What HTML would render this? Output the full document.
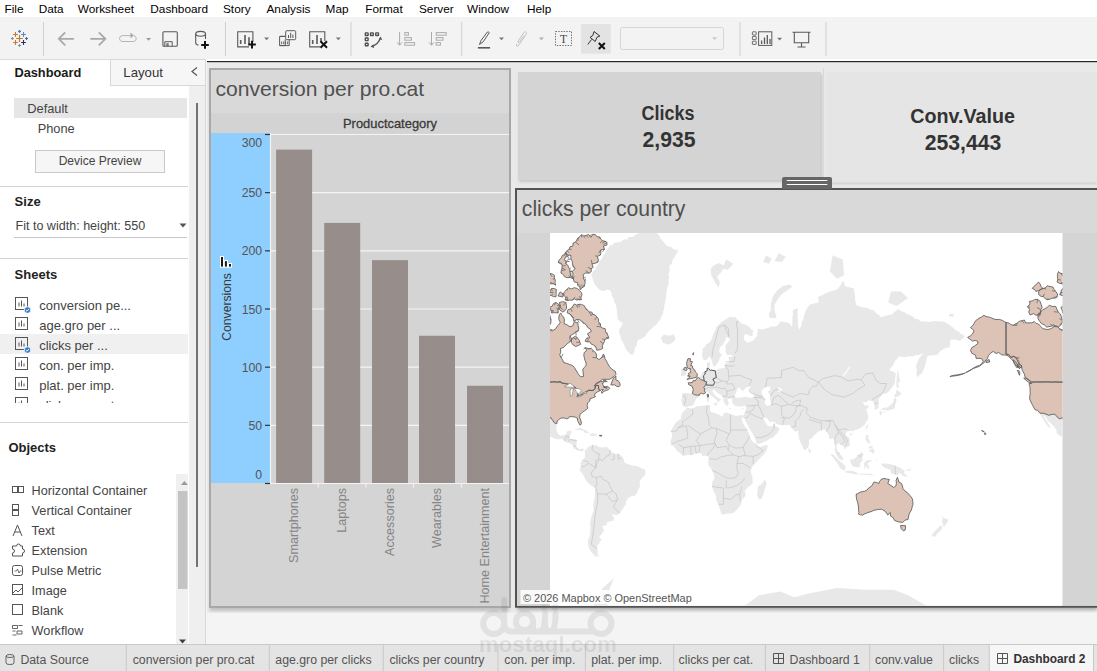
<!DOCTYPE html>
<html><head><meta charset="utf-8"><title>Tableau</title>
<style>html,body{margin:0;padding:0;width:1097px;height:671px;overflow:hidden;background:#f3f3f3}
svg{display:block;font-family:"Liberation Sans", sans-serif}</style></head>
<body><svg width="1097" height="671" viewBox="0 0 1097 671">
<rect x="0" y="0" width="1097" height="671" fill="#f3f3f3" />
<rect x="0" y="0" width="1097" height="17" fill="#ffffff" />
<text x="4.5" y="13" font-size="11.8" fill="#000" font-weight="normal" text-anchor="start" >File</text>
<text x="38.7" y="13" font-size="11.8" fill="#000" font-weight="normal" text-anchor="start" >Data</text>
<text x="77.8" y="13" font-size="11.8" fill="#000" font-weight="normal" text-anchor="start" >Worksheet</text>
<text x="150.3" y="13" font-size="11.8" fill="#000" font-weight="normal" text-anchor="start" >Dashboard</text>
<text x="223" y="13" font-size="11.8" fill="#000" font-weight="normal" text-anchor="start" >Story</text>
<text x="266.5" y="13" font-size="11.8" fill="#000" font-weight="normal" text-anchor="start" >Analysis</text>
<text x="325.6" y="13" font-size="11.8" fill="#000" font-weight="normal" text-anchor="start" >Map</text>
<text x="365.3" y="13" font-size="11.8" fill="#000" font-weight="normal" text-anchor="start" >Format</text>
<text x="419" y="13" font-size="11.8" fill="#000" font-weight="normal" text-anchor="start" >Server</text>
<text x="467.1" y="13" font-size="11.8" fill="#000" font-weight="normal" text-anchor="start" >Window</text>
<text x="527" y="13" font-size="11.8" fill="#000" font-weight="normal" text-anchor="start" >Help</text>
<rect x="0" y="17" width="1097" height="43" fill="#f3f3f3" />
<line x1="43.5" y1="22" x2="43.5" y2="56" stroke="#d0d0d0" stroke-width="1" />
<line x1="225.5" y1="22" x2="225.5" y2="56" stroke="#d0d0d0" stroke-width="1" />
<line x1="351" y1="22" x2="351" y2="56" stroke="#d0d0d0" stroke-width="1" />
<line x1="461.7" y1="22" x2="461.7" y2="56" stroke="#d0d0d0" stroke-width="1" />
<line x1="740" y1="22" x2="740" y2="56" stroke="#d0d0d0" stroke-width="1" />
<line x1="826" y1="22" x2="826" y2="56" stroke="#d0d0d0" stroke-width="1" />
<path d="M16.1 38.5H22.9M19.5 35.1V41.9" stroke="#c77a2e" stroke-width="1.2"/>
<path d="M13.1 34.5H17.9M15.5 32.1V36.9" stroke="#c77a2e" stroke-width="1.1"/>
<path d="M21.1 34.5H25.9M23.5 32.1V36.9" stroke="#5c87c2" stroke-width="1.1"/>
<path d="M13.1 42.5H17.9M15.5 40.1V44.9" stroke="#c77a2e" stroke-width="1.1"/>
<path d="M21.1 42.5H25.9M23.5 40.1V44.9" stroke="#2d3070" stroke-width="1.1"/>
<path d="M18.0 31.4H21.0M19.5 29.9V32.9" stroke="#4f7db8" stroke-width="1.1"/>
<path d="M10.9 38.5H13.9M12.4 37.0V40.0" stroke="#7c95b0" stroke-width="1.1"/>
<path d="M25.0 38.5H28.0M26.5 37.0V40.0" stroke="#4468a8" stroke-width="1.1"/>
<path d="M18.0 45.5H21.0M19.5 44.0V47.0" stroke="#7c95b0" stroke-width="1.1"/>
<path d="M59.2 38.8H73.9M65.2 32.4L58.8 38.8L65.2 45.3" fill="none" stroke="#a9a9a9" stroke-width="1.8"/>
<path d="M90.3 38.8H105M98.8 32.4L105.4 38.8L98.8 45.3" fill="none" stroke="#a9a9a9" stroke-width="1.8"/>
<path d="M130.5 35.6H122a3 3 0 0 0 0 5.9H133.8a3 3 0 0 0 0 -5.9" fill="none" stroke="#b5b5b5" stroke-width="1"/>
<path d="M130.5 32.6L133.8 35.6L130.5 38.2Z" fill="#a5a5a5"/>
<path d="M146.1 37.900000000000006H151.1L148.6 40.7Z" fill="#9a9a9a"/>
<rect x="162.9" y="31.7" width="14.4" height="14.6" rx="1" fill="none" stroke="#5a5a5a" stroke-width="1.1"/>
<path d="M164.8 46.3V41.7H172.2V46.3" fill="none" stroke="#5a5a5a" stroke-width="1"/><rect x="166.3" y="43.2" width="2.4" height="3" fill="#777"/>
<path d="M195.7 33.8V42.7Q195.7 44.5 198.5 45.3M205.5 33.8V38.9" fill="none" stroke="#5a5a5a" stroke-width="1.1"/><ellipse cx="200.6" cy="33.8" rx="4.9" ry="2.4" fill="none" stroke="#5a5a5a" stroke-width="1.1"/>
<path d="M201.2 44.9H208.8M205 41.1V48.7" stroke="#111" stroke-width="2"/>
<path d="M249 46.9H237.7V31.7H252.9V42" fill="none" stroke="#5a5a5a" stroke-width="1.1"/>
<path d="M240.7 44V40M245 44V35M249 44V37.2" stroke="#5a5a5a" stroke-width="1.6"/>
<path d="M248.2 44.6H255.8M252 40.8V48.4" stroke="#111" stroke-width="2"/>
<path d="M264.1 37.5H269.1L266.6 40.3Z" fill="#777"/>
<rect x="285.7" y="30.7" width="10" height="9" rx="1" fill="#f3f3f3" stroke="#5a5a5a" stroke-width="1"/>
<path d="M288.5 38V35M290.7 38V32.8M292.9 38V34.5" stroke="#5a5a5a" stroke-width="1"/>
<path d="M285.2 39.5V45.6H279.6V36.4H285.2" fill="none" stroke="#5a5a5a" stroke-width="1"/><path d="M280 36.4H285.2" stroke="#5a5a5a"/>
<path d="M281.6 44.2V41.5M283.6 44.2V41.5M285.6 44.2V41.5M287.6 44.2V41.5" stroke="#5a5a5a" stroke-width="0.9"/><path d="M279.6 45.6H289.2V39.5" fill="none" stroke="#5a5a5a" stroke-width="1"/>
<path d="M320 46.9H309.7V31.7H324.8V41" fill="none" stroke="#5a5a5a" stroke-width="1.1"/>
<path d="M312.7 44V40M317 44V35M321 42V38" stroke="#5a5a5a" stroke-width="1.6"/>
<path d="M320.5 41.3L327 47.8M327 41.3L320.5 47.8" stroke="#111" stroke-width="2"/>
<path d="M335.8 37.5H340.8L338.3 40.3Z" fill="#777"/>
<rect x="365.3" y="32.9" width="2.8" height="2.6" rx="0.5" fill="none" stroke="#4f4f4f" stroke-width="1.4"/>
<rect x="370.5" y="32.9" width="2.8" height="2.6" rx="0.5" fill="none" stroke="#4f4f4f" stroke-width="1.4"/>
<rect x="375.7" y="32.9" width="2.8" height="2.6" rx="0.5" fill="none" stroke="#4f4f4f" stroke-width="1.4"/>
<rect x="365.3" y="38" width="2.8" height="2.6" rx="0.5" fill="none" stroke="#4f4f4f" stroke-width="1.4"/>
<rect x="365.3" y="43.2" width="2.8" height="2.6" rx="0.5" fill="none" stroke="#4f4f4f" stroke-width="1.4"/>
<path d="M371.5 46.5Q378.5 44.5 380.5 37.8" fill="none" stroke="#5a5a5a" stroke-width="1.3"/><path d="M380.8 36.5L382.2 40L378.6 39.2Z M370.5 46.8L373.5 44.2L374.2 48Z" fill="#5a5a5a"/>
<path d="M399.6 32V45M397.2 42.3L399.6 45.3L402 42.3" fill="none" stroke="#ababab" stroke-width="1"/>
<rect x="404.8" y="32.6" width="3.6" height="2.6" fill="none" stroke="#ababab"/><rect x="404.8" y="37.6" width="6.6" height="2.6" fill="none" stroke="#ababab"/><rect x="404.8" y="42.6" width="9.8" height="2.6" fill="none" stroke="#ababab"/>
<path d="M431.5 32V45M429.1 42.3L431.5 45.3L433.9 42.3" fill="none" stroke="#ababab" stroke-width="1"/>
<rect x="436.2" y="32.6" width="10" height="2.6" fill="none" stroke="#ababab"/><rect x="436.2" y="37.6" width="6.8" height="2.6" fill="none" stroke="#ababab"/><rect x="436.2" y="42.6" width="4.2" height="2.6" fill="none" stroke="#ababab"/>
<path d="M479.5 44.5L481 40.5L487.2 32.2Q488.5 31.5 489.3 32.6L483.2 41.8L479.5 44.5Z" fill="none" stroke="#5a5a5a" stroke-width="1"/>
<path d="M477.9 47.8H490.1" stroke="#5a5a5a" stroke-width="1.6"/>
<path d="M499.0 37.5H504.0L501.5 40.3Z" fill="#777"/>
<path d="M516.5 44Q515.5 46.5 518 46.2L525.8 35Q527.5 31.5 524.5 31.8L517.8 41.5Q517.5 43 519 42.5L524 35.5" fill="none" stroke="#bdbdbd" stroke-width="0.9"/>
<path d="M538.9 37.5H543.9L541.4 40.3Z" fill="#b0b0b0"/>
<rect x="555.5" y="31.5" width="16" height="14" fill="none" stroke="#666" stroke-width="0.9" stroke-dasharray="1.5 1.2"/>
<text x="563.5" y="43.2" font-size="11.5" font-family="Liberation Serif" fill="#444" text-anchor="middle">T</text>
<rect x="581" y="24" width="29.8" height="29.7" fill="#e3e3e3" />
<path d="M594 31.5L599.8 36L597 37.2L595.2 41.5L590 37.3L592.8 35.5Z M591.5 39.5L587.8 44.5" fill="none" stroke="#333" stroke-width="1"/>
<path d="M598.8 43L604.8 49M604.8 43L598.8 49" stroke="#111" stroke-width="2"/>
<rect x="620.5" y="27.5" width="103" height="22" rx="2" fill="#f3f3f3" stroke="#d6d6d6" stroke-width="1"/>
<path d="M712.1 37.300000000000004H717.1L714.6 40.1Z" fill="#c8c8c8"/>
<rect x="752.4" y="31.8" width="3.8" height="3.2" rx="0.5" fill="none" stroke="#5a5a5a" stroke-width="0.9"/>
<rect x="752.4" y="36.4" width="3.8" height="3.2" rx="0.5" fill="none" stroke="#5a5a5a" stroke-width="0.9"/>
<rect x="752.4" y="41.2" width="3.8" height="3.2" rx="0.5" fill="none" stroke="#5a5a5a" stroke-width="0.9"/>
<rect x="758.6" y="31.8" width="13.2" height="13.6" fill="none" stroke="#5a5a5a" stroke-width="1"/>
<path d="M761.6 44V40.5M764.5 44V37.5M767.3 44V35M770 44V39" stroke="#5a5a5a" stroke-width="1.3"/>
<path d="M777.1 37.7H782.1L779.6 40.5Z" fill="#777"/>
<path d="M792.5 32.2H810.5M794.3 32.2V42.8H808.7V32.2M801.5 42.8V47M797.5 47H805.5" fill="none" stroke="#5a5a5a" stroke-width="1.1"/>
<rect x="0" y="60" width="189" height="584" fill="#ffffff" />
<line x1="0" y1="59.5" x2="205" y2="59.5" stroke="#dcdcdc" stroke-width="1" />
<rect x="189" y="60" width="16" height="584" fill="#efefef" />
<rect x="196" y="103" width="2" height="464" fill="#737373" />
<line x1="205.5" y1="60" x2="205.5" y2="644" stroke="#d8d8d8" stroke-width="1" />
<rect x="110.5" y="59.5" width="95" height="26" fill="#f6f6f6" stroke="#d8d8d8" stroke-width="1"/>
<text x="14.4" y="77" font-size="12.8" fill="#1a1a1a" font-weight="bold" text-anchor="start" >Dashboard</text>
<text x="123.3" y="77" font-size="13.2" fill="#333" font-weight="normal" text-anchor="start" >Layout</text>
<path d="M197 67.5 L192 71.5 L197 75.5" fill="none" stroke="#555" stroke-width="1.2"/>
<rect x="14" y="98" width="173" height="20" fill="#e6e6e6" />
<text x="27.3" y="112.5" font-size="12.8" fill="#444" font-weight="normal" text-anchor="start" >Default</text>
<text x="37.7" y="132.5" font-size="12.8" fill="#444" font-weight="normal" text-anchor="start" >Phone</text>
<rect x="35.5" y="150.5" width="129" height="22" fill="#f6f6f6" stroke="#c9c9c9" stroke-width="1"/>
<text x="100" y="165.2" font-size="12" fill="#444" font-weight="normal" text-anchor="middle" >Device Preview</text>
<line x1="0" y1="186.5" x2="188" y2="186.5" stroke="#d4d4d4" stroke-width="1" />
<text x="14.6" y="205.6" font-size="13" fill="#222" font-weight="bold" text-anchor="start" >Size</text>
<text x="15.5" y="229.7" font-size="12.55" fill="#444" font-weight="normal" text-anchor="start" >Fit to width: height: 550</text>
<path d="M179.5 223.5 L186.5 223.5 L183 227.5 Z" fill="#555"/>
<line x1="14" y1="237.5" x2="187" y2="237.5" stroke="#c8c8c8" stroke-width="1" />
<line x1="0" y1="258.5" x2="188" y2="258.5" stroke="#d4d4d4" stroke-width="1" />
<text x="14.6" y="278.8" font-size="13" fill="#222" font-weight="bold" text-anchor="start" >Sheets</text>
<rect x="0" y="334" width="188" height="20" fill="#f0f0f0" />
<clipPath id="shclip"><rect x="0" y="290" width="188" height="113"/></clipPath>
<g clip-path="url(#shclip)">
<text x="39.2" y="309.5" font-size="13" fill="#444" font-weight="normal" text-anchor="start" >conversion pe...</text>
<rect x="15.5" y="297.5" width="12" height="12" fill="none" stroke="#555" stroke-width="1"/>
<path d="M19 306.5 v-4 M21.5 306.5 v-6 M24 306.5 v-3" stroke="#555" stroke-width="1"/>
<circle cx="27.5" cy="310.0" r="3.3" fill="#3d7dca" stroke="#fff" stroke-width="0.8"/>
<path d="M25.8 310.0 l1.2 1.2 l2 -2.2" fill="none" stroke="#fff" stroke-width="0.9"/>
<text x="39.2" y="329.5" font-size="13" fill="#444" font-weight="normal" text-anchor="start" >age.gro per ...</text>
<rect x="15.5" y="317.5" width="12" height="12" fill="none" stroke="#555" stroke-width="1"/>
<path d="M19 326.5 v-4 M21.5 326.5 v-6 M24 326.5 v-3" stroke="#555" stroke-width="1"/>
<text x="39.2" y="349.5" font-size="13" fill="#444" font-weight="normal" text-anchor="start" >clicks per ...</text>
<rect x="15.5" y="337.5" width="12" height="12" fill="none" stroke="#555" stroke-width="1"/>
<path d="M19 346.5 v-4 M21.5 346.5 v-6 M24 346.5 v-3" stroke="#555" stroke-width="1"/>
<circle cx="27.5" cy="350.0" r="3.3" fill="#3d7dca" stroke="#fff" stroke-width="0.8"/>
<path d="M25.8 350.0 l1.2 1.2 l2 -2.2" fill="none" stroke="#fff" stroke-width="0.9"/>
<text x="39.2" y="369.5" font-size="13" fill="#444" font-weight="normal" text-anchor="start" >con. per imp.</text>
<rect x="15.5" y="357.5" width="12" height="12" fill="none" stroke="#555" stroke-width="1"/>
<path d="M19 366.5 v-4 M21.5 366.5 v-6 M24 366.5 v-3" stroke="#555" stroke-width="1"/>
<text x="39.2" y="389.5" font-size="13" fill="#444" font-weight="normal" text-anchor="start" >plat. per imp.</text>
<rect x="15.5" y="377.5" width="12" height="12" fill="none" stroke="#555" stroke-width="1"/>
<path d="M19 386.5 v-4 M21.5 386.5 v-6 M24 386.5 v-3" stroke="#555" stroke-width="1"/>
<text x="39.2" y="409.5" font-size="13" fill="#444" font-weight="normal" text-anchor="start" >clicks per cat.</text>
<rect x="15.5" y="397.5" width="12" height="12" fill="none" stroke="#555" stroke-width="1"/>
<path d="M19 406.5 v-4 M21.5 406.5 v-6 M24 406.5 v-3" stroke="#555" stroke-width="1"/>
</g>
<line x1="0" y1="422.5" x2="188" y2="422.5" stroke="#d4d4d4" stroke-width="1" />
<text x="8.4" y="451.8" font-size="13" fill="#222" font-weight="bold" text-anchor="start" >Objects</text>
<text x="31.6" y="495" font-size="12.7" fill="#444" font-weight="normal" text-anchor="start" >Horizontal Container</text>
<text x="31.6" y="515" font-size="12.7" fill="#444" font-weight="normal" text-anchor="start" >Vertical Container</text>
<text x="31.6" y="535" font-size="12.7" fill="#444" font-weight="normal" text-anchor="start" >Text</text>
<text x="31.6" y="555" font-size="12.7" fill="#444" font-weight="normal" text-anchor="start" >Extension</text>
<text x="31.6" y="575" font-size="12.7" fill="#444" font-weight="normal" text-anchor="start" >Pulse Metric</text>
<text x="31.6" y="595" font-size="12.7" fill="#444" font-weight="normal" text-anchor="start" >Image</text>
<text x="31.6" y="615" font-size="12.7" fill="#444" font-weight="normal" text-anchor="start" >Blank</text>
<text x="31.6" y="635" font-size="12.7" fill="#444" font-weight="normal" text-anchor="start" >Workflow</text>
<rect x="12.5" y="486.5" width="5" height="6" fill="none" stroke="#555"/><rect x="18.5" y="486.5" width="5" height="6" fill="none" stroke="#555"/>
<rect x="12.5" y="504.5" width="6" height="5" fill="none" stroke="#555"/><rect x="12.5" y="510.5" width="6" height="5" fill="none" stroke="#555"/>
<path d="M13 536 L17.5 525 L22 536 M14.6 532 h5.8" fill="none" stroke="#555" stroke-width="1"/>
<path d="M12.5 546 h4 a2 2 0 0 1 4 0 h2 v3 a2 2 0 0 1 0 4 v3 h-10 v-3 a2 2 0 0 0 0 -4 z" fill="none" stroke="#555" stroke-width="1"/>
<rect x="12.5" y="565.5" width="10" height="10" rx="2" fill="none" stroke="#555"/><path d="M14.5 571 h2 l1 -2 l1.5 4 l1 -2 h1.5" fill="none" stroke="#555" stroke-width="0.8"/>
<rect x="12.5" y="584.5" width="10" height="10" fill="none" stroke="#555"/><path d="M13 593 l3 -3 l2 2 l4 -4" fill="none" stroke="#555" stroke-width="1"/>
<rect x="12.5" y="604.5" width="10" height="10" fill="none" stroke="#555"/>
<path d="M12.5 625.5 h5 v3 h-5 z M18.5 625.5 h4 M12.5 631 h3 M17 631 h5 v3 h-5 z M12.5 635 h4" fill="none" stroke="#555" stroke-width="0.9"/>
<rect x="176" y="474" width="12" height="170" fill="#f0f0f0" />
<rect x="178" y="491" width="9.5" height="98" fill="#c4c4c4" />
<path d="M181 485 L184.4 481 L187.8 485 Z" fill="#999"/>
<path d="M179 639.5 L182.5 643.5 L186 639.5 Z" fill="#4a3a3a"/>
<rect x="206" y="60" width="891" height="584" fill="#f4f4f4" />
<rect x="207" y="62" width="890" height="550.6" fill="#e9e9e9" />
<rect x="206" y="59" width="891" height="2" fill="#ffffff" />
<rect x="207" y="61" width="890" height="1.2" fill="#262626" />
<defs><filter id="sh" x="-5%" y="-5%" width="110%" height="110%"><feGaussianBlur stdDeviation="1.5"/></filter></defs>
<rect x="210" y="71" width="299" height="540" fill="#b8b8b8" filter="url(#sh)" opacity="0.8"/>
<rect x="210" y="69" width="300" height="538" fill="#d9d9d9" stroke="#a8a8a8" stroke-width="2"/>
<text x="215.5" y="96" font-size="21.1" fill="#505050" font-weight="normal" text-anchor="start" >conversion per pro.cat</text>
<rect x="211" y="113" width="298" height="20" fill="#d3d3d3" />
<text x="390" y="128.2" font-size="13" fill="#3a3a3a" font-weight="normal" text-anchor="middle" textLength="94" lengthAdjust="spacingAndGlyphs" stroke="#3a3a3a" stroke-width="0.3">Productcategory</text>
<rect x="211" y="133" width="298" height="473" fill="#d4d4d4" />
<rect x="211" y="133" width="59.5" height="350" fill="#8fcfff" />
<line x1="271" y1="425.3333333333333" x2="509" y2="425.3333333333333" stroke="#f4f4f4" stroke-width="1.2" />
<line x1="271" y1="367.1666666666667" x2="509" y2="367.1666666666667" stroke="#f4f4f4" stroke-width="1.2" />
<line x1="271" y1="309.0" x2="509" y2="309.0" stroke="#f4f4f4" stroke-width="1.2" />
<line x1="271" y1="250.83333333333334" x2="509" y2="250.83333333333334" stroke="#f4f4f4" stroke-width="1.2" />
<line x1="271" y1="192.66666666666669" x2="509" y2="192.66666666666669" stroke="#f4f4f4" stroke-width="1.2" />
<line x1="271" y1="134.5" x2="509" y2="134.5" stroke="#f4f4f4" stroke-width="1.2" />
<rect x="276.1" y="149.62333333333333" width="36" height="333.37666666666667" fill="#978e8b" />
<rect x="324.2" y="222.91333333333336" width="36" height="260.08666666666664" fill="#978e8b" />
<rect x="372" y="260.14" width="36" height="222.86" fill="#978e8b" />
<rect x="419" y="335.75666666666666" width="36" height="147.24333333333334" fill="#978e8b" />
<rect x="467" y="385.78" width="36" height="97.22000000000003" fill="#978e8b" />
<line x1="270.5" y1="133" x2="270.5" y2="484" stroke="#f4f4f4" stroke-width="1.2" />
<line x1="270.5" y1="483.5" x2="509" y2="483.5" stroke="#f4f4f4" stroke-width="1.2" />
<line x1="265" y1="483.5" x2="270" y2="483.5" stroke="#333" stroke-width="1.2" />
<text x="262.2" y="479" font-size="12.3" fill="#555" font-weight="normal" text-anchor="end" >0</text>
<line x1="265" y1="425.3333333333333" x2="270" y2="425.3333333333333" stroke="#333" stroke-width="1.2" />
<text x="262.2" y="429.8333333333333" font-size="12.3" fill="#555" font-weight="normal" text-anchor="end" >50</text>
<line x1="265" y1="367.1666666666667" x2="270" y2="367.1666666666667" stroke="#333" stroke-width="1.2" />
<text x="262.2" y="371.6666666666667" font-size="12.3" fill="#555" font-weight="normal" text-anchor="end" >100</text>
<line x1="265" y1="309.0" x2="270" y2="309.0" stroke="#333" stroke-width="1.2" />
<text x="262.2" y="313.5" font-size="12.3" fill="#555" font-weight="normal" text-anchor="end" >150</text>
<line x1="265" y1="250.83333333333334" x2="270" y2="250.83333333333334" stroke="#333" stroke-width="1.2" />
<text x="262.2" y="255.33333333333334" font-size="12.3" fill="#555" font-weight="normal" text-anchor="end" >200</text>
<line x1="265" y1="192.66666666666669" x2="270" y2="192.66666666666669" stroke="#333" stroke-width="1.2" />
<text x="262.2" y="197.16666666666669" font-size="12.3" fill="#555" font-weight="normal" text-anchor="end" >250</text>
<line x1="265" y1="134.5" x2="270" y2="134.5" stroke="#333" stroke-width="1.2" />
<text x="262.2" y="147.4" font-size="12.3" fill="#555" font-weight="normal" text-anchor="end" >300</text>
<line x1="318.2" y1="484" x2="318.2" y2="487.5" stroke="#f4f4f4" stroke-width="1" />
<line x1="365.9" y1="484" x2="365.9" y2="487.5" stroke="#f4f4f4" stroke-width="1" />
<line x1="413.6" y1="484" x2="413.6" y2="487.5" stroke="#f4f4f4" stroke-width="1" />
<line x1="461.3" y1="484" x2="461.3" y2="487.5" stroke="#f4f4f4" stroke-width="1" />
<text transform="translate(298.35,488) rotate(-90)" x="0" y="0" font-size="12.6" fill="#858585" text-anchor="end">Smartphones</text>
<text transform="translate(346.05,488) rotate(-90)" x="0" y="0" font-size="12.6" fill="#858585" text-anchor="end">Laptops</text>
<text transform="translate(393.75,488) rotate(-90)" x="0" y="0" font-size="12.6" fill="#858585" text-anchor="end">Accessories</text>
<text transform="translate(441.45000000000005,488) rotate(-90)" x="0" y="0" font-size="12.6" fill="#858585" text-anchor="end">Wearables</text>
<text transform="translate(489.15,488) rotate(-90)" x="0" y="0" font-size="12.6" fill="#858585" text-anchor="end">Home Entertainment</text>
<text transform="translate(231,340.8) rotate(-90)" font-size="12.2" fill="#383838">Conversions</text>
<rect x="220" y="256" width="4" height="11.600000000000023" fill="#fff"/>
<rect x="223.9" y="260.1" width="4" height="7.5" fill="#fff"/>
<rect x="228" y="263" width="4" height="4.600000000000023" fill="#fff"/>
<rect x="221" y="257" width="2" height="9.600000000000023" fill="#1a1a1a"/>
<rect x="224.9" y="261.1" width="2" height="5.5" fill="#1a1a1a"/>
<rect x="229" y="264" width="2" height="2.6000000000000227" fill="#1a1a1a"/>
<rect x="519" y="74" width="303" height="108" fill="#c4c4c4" filter="url(#sh)"/>
<rect x="518" y="72" width="302.5" height="108" fill="#d4d4d4" />
<text x="668.1" y="119.8" font-size="20" fill="#333" font-weight="bold" text-anchor="middle" textLength="53" lengthAdjust="spacingAndGlyphs">Clicks</text>
<text x="669" y="147.4" font-size="21.2" fill="#333" font-weight="bold" text-anchor="middle" >2,935</text>
<line x1="823.5" y1="68" x2="823.5" y2="185" stroke="#d9d9d9" stroke-width="1" />
<rect x="828" y="74" width="269" height="110" fill="#cfcfcf" filter="url(#sh)"/>
<rect x="827" y="72" width="270" height="110.5" fill="#e5e5e5" />
<text x="962.6" y="122.6" font-size="20.3" fill="#333" font-weight="bold" text-anchor="middle" textLength="104.8" lengthAdjust="spacingAndGlyphs">Conv.Value</text>
<text x="963" y="150.2" font-size="21.2" fill="#333" font-weight="bold" text-anchor="middle" >253,443</text>
<rect x="517" y="190" width="580" height="420" fill="#b0b0b0" filter="url(#sh)"/>
<rect x="516" y="189" width="581" height="418" fill="#d9d9d9" />
<path d="M1097 189 H516 V606.8 H1097" fill="none" stroke="#545454" stroke-width="2"/>
<text x="521.8" y="215.5" font-size="21.2" fill="#505050" font-weight="normal" text-anchor="start" >clicks per country</text>
<rect x="517" y="233" width="580" height="372.8" fill="#d4d4d4" />
<rect x="550" y="233" width="512.5" height="372.8" fill="#ffffff" />
<clipPath id="mapclip"><rect x="550" y="233" width="512.5" height="372.8"/></clipPath>
<g clip-path="url(#mapclip)">
<path d="M591.3 275.2L592.3 273.1L593.4 271.0L595.3 269.5L595.7 267.0L597.6 265.5L598.6 263.4L599.4 261.2L601.3 259.6L602.5 257.6L603.1 255.2L604.8 253.5L605.6 251.2L606.8 249.2L608.5 247.5L609.8 245.6L612.1 245.2L613.8 243.3L616.0 242.6L618.4 242.3L620.7 241.9L622.6 240.5L624.6 239.4L627.1 239.4L628.7 237.1L631.1 237.0L633.4 236.7L635.2 235.0L637.3 233.9L639.4 233.1L641.6 232.5L644.1 232.4L645.8 230.6L648.2 230.4L650.4 229.7L652.4 228.6L654.0 230.2L655.2 232.1L657.2 233.3L658.6 234.9L659.9 236.8L660.7 239.0L662.4 240.4L664.0 242.0L665.1 244.0L666.6 245.6L668.9 246.5L671.3 247.2L673.2 249.0L675.6 249.8L678.0 250.5L677.3 252.8L675.7 254.8L674.7 257.0L673.2 258.9L672.3 261.1L671.9 263.6L669.8 265.3L669.4 267.8L669.8 270.3L669.2 272.8L668.4 275.2L669.2 277.8L668.4 280.3L669.0 282.8L668.0 285.3L667.3 287.7L666.8 290.1L666.7 292.6L665.8 294.9L666.3 297.5L665.3 299.9L665.2 302.4L664.6 304.7L664.2 307.1L664.0 309.6L662.9 311.8L663.0 314.3L661.2 316.2L660.7 318.7L659.5 320.8L657.5 322.4L656.4 324.9L653.9 326.0L652.4 328.0L650.4 329.8L648.3 331.5L646.7 333.7L645.3 336.0L643.1 337.7L640.7 338.9L638.2 340.1L637.1 342.2L637.1 344.8L635.6 346.8L634.6 349.0L634.1 352.1L632.5 354.9L630.0 353.9L628.3 352.0L625.9 349.6L624.7 346.5L624.0 344.1L622.6 342.1L621.0 339.2L620.5 336.0L619.3 333.4L619.0 330.6L620.1 328.0L621.9 325.7L622.6 322.9L619.7 321.3L617.6 318.7L617.3 316.5L617.2 314.3L616.9 312.1L616.9 309.5L616.3 307.0L615.8 304.5L614.3 302.3L614.1 299.7L612.9 297.4L611.7 295.0L611.4 292.3L609.8 290.2L606.9 289.6L604.2 291.1L601.3 290.8L599.1 289.3L597.4 287.4L595.6 285.5L594.2 283.4L593.2 280.7L592.4 277.9ZM663.0 342.7L660.9 337.7L663.8 334.6L669.4 335.7L673.7 334.2L675.8 338.8L673.7 341.8L668.7 344.7ZM528.7 413.2L532.0 413.2L534.7 414.0L537.4 415.2L541.4 414.3L543.8 414.3L546.6 417.6L548.7 418.9L550.9 417.6L552.3 419.7L554.4 422.8L556.8 423.7L556.5 426.9L556.3 430.0L557.3 432.2L558.7 434.5L560.8 435.7L564.4 435.1L566.5 433.8L566.8 431.5L569.1 430.8L571.5 430.7L570.8 433.8L569.8 436.8L569.6 439.0L572.9 439.1L575.7 439.3L576.7 441.2L576.6 443.7L576.4 446.3L577.9 448.4L579.3 449.2L582.1 448.4L585.0 449.7L583.5 450.6L581.4 451.6L579.3 450.9L577.1 450.0L573.6 448.4L573.2 446.3L570.8 443.4L567.9 442.7L565.1 441.9L562.9 439.6L560.4 438.8L558.0 439.6L555.1 438.7L551.6 437.2L548.0 435.6L545.2 432.6L545.5 430.7L544.5 428.7L543.0 427.1L541.6 425.3L539.5 423.0L537.4 421.4L535.2 418.1L532.4 415.3ZM532.0 414.5L532.8 417.3L535.2 420.6L538.8 426.4L539.5 428.1L538.4 427.7L536.0 425.6L533.1 420.9L531.0 418.1L529.3 414.8L528.7 413.2ZM574.3 430.1L578.6 428.1L581.4 428.3L585.7 430.3L589.6 432.7L585.0 433.2L583.5 430.7L579.3 429.7L575.7 430.1ZM589.2 435.4L591.6 433.2L595.6 433.5L597.9 435.3L594.2 435.7L592.0 435.7ZM583.8 435.6L586.7 436.0L585.9 436.3L584.2 435.9ZM585.2 450.6L587.1 448.4L587.8 446.9L590.6 445.8L592.8 444.4L593.8 446.3L595.6 444.5L598.4 447.0L602.7 447.6L607.0 446.7L608.4 448.4L609.8 449.9L611.5 451.7L613.4 453.5L615.8 453.9L618.3 453.7L621.9 456.0L624.0 459.4L624.0 462.0L626.1 463.4L628.9 464.5L631.8 465.3L634.3 465.7L636.8 466.1L640.3 467.4L642.6 468.7L645.0 469.8L645.6 472.7L644.6 475.6L642.5 477.7L639.9 480.6L639.7 482.8L640.0 485.1L639.6 487.2L638.3 489.4L637.5 491.8L635.4 495.6L631.8 495.9L628.3 497.9L626.1 501.0L625.8 504.3L624.4 506.2L623.3 508.3L621.7 510.3L620.5 512.5L618.3 514.8L614.8 514.8L611.9 514.3L614.1 517.7L613.4 520.8L610.1 521.3L607.0 522.2L606.7 525.0L602.7 525.9L602.7 528.8L604.4 529.4L603.3 531.6L602.0 533.7L599.1 536.8L601.6 539.5L600.3 541.3L599.2 543.2L597.7 544.9L597.0 548.1L597.7 549.9L597.6 552.8L597.6 555.7L600.6 555.9L598.1 556.5L595.6 556.4L592.8 553.5L590.7 551.3L589.2 548.7L588.5 546.2L588.0 543.6L587.8 541.0L588.8 538.3L589.9 535.7L590.0 532.7L590.6 529.8L590.2 525.9L590.1 523.1L590.6 520.4L591.1 518.0L591.8 515.6L592.7 513.2L593.5 510.8L593.5 506.7L593.3 504.2L593.8 501.8L594.6 499.1L594.9 496.3L595.1 494.1L594.9 491.8L595.3 489.5L594.9 488.0L591.3 485.5L589.1 483.9L587.1 482.1L585.4 479.2L584.0 476.7L582.8 474.1L581.3 472.4L580.0 470.5L579.7 468.4L581.4 466.3L580.3 464.1L581.4 460.9L583.1 459.9L585.0 457.0L585.2 453.5L584.5 451.7ZM686.8 407.5L689.5 407.9L692.2 408.7L694.4 407.7L696.4 406.3L699.3 406.3L702.1 405.7L704.5 405.5L706.8 405.2L709.2 405.0L710.6 405.7L709.9 408.0L710.6 411.5L712.8 412.6L716.7 413.7L719.5 415.0L722.0 416.8L723.4 415.7L723.4 413.2L727.0 412.6L730.5 414.3L733.4 414.9L736.2 416.0L738.5 415.5L740.9 415.2L743.6 415.3L744.6 418.1L741.3 417.5L742.1 419.8L742.6 422.2L743.8 424.8L745.4 427.2L746.8 429.2L747.8 431.5L749.0 433.6L749.7 436.0L751.1 439.7L753.9 442.7L756.5 444.1L758.2 447.0L760.6 446.8L762.8 446.0L765.1 445.3L767.4 445.0L767.7 447.0L766.5 449.9L765.3 452.8L763.7 454.7L761.7 456.3L760.1 458.2L758.2 459.9L756.8 462.0L753.9 464.6L751.5 467.7L750.7 471.2L751.4 474.2L752.5 477.0L752.5 480.3L752.7 483.5L750.2 485.5L747.5 487.2L746.2 489.2L744.7 491.0L745.3 493.6L745.4 496.3L743.4 498.0L741.6 499.9L741.1 504.3L739.7 506.3L738.3 508.3L736.1 510.3L734.0 512.5L730.5 513.4L727.0 513.4L723.4 514.8L721.0 513.4L720.3 510.0L719.3 507.2L718.4 504.3L717.2 502.3L716.3 500.3L716.1 497.5L715.6 494.8L713.5 491.0L712.9 488.6L711.8 486.5L712.2 484.3L712.3 482.1L713.6 479.8L714.5 477.4L713.5 473.4L712.3 470.5L710.6 467.9L708.5 465.6L708.2 461.3L708.9 457.7L707.1 455.6L702.8 456.0L700.7 453.0L696.4 453.5L694.2 454.2L692.2 455.2L687.9 454.7L684.4 455.7L681.5 454.2L678.7 452.3L676.5 450.6L675.8 448.4L673.7 446.6L671.3 444.4L670.4 440.9L671.9 437.5L672.1 433.8L670.9 431.5L672.1 428.7L673.7 426.1L674.8 424.1L675.8 422.2L678.3 420.5L680.8 418.9L681.1 415.7L682.9 411.8L685.8 409.7ZM765.0 479.2L766.7 484.3L765.3 488.0L763.2 494.8L761.7 498.7L758.9 499.5L757.2 495.6L757.5 491.0L757.9 486.5L761.0 484.7L763.2 482.1ZM687.0 407.1L684.5 406.7L682.4 405.4L681.5 401.8L681.5 398.9L682.5 396.2L681.8 393.9L683.6 392.9L686.5 392.9L689.3 393.5L692.4 393.5L693.3 389.3L691.9 386.2L688.6 384.5L688.3 382.8L692.4 382.6L693.2 380.4L695.3 380.9L697.3 377.8L700.0 376.6L701.4 375.3L702.1 372.2L704.9 371.7L707.1 371.0L707.2 366.8L706.6 363.5L709.9 361.4L709.9 365.6L709.2 368.1L711.3 369.8L714.9 370.5L717.6 369.3L720.6 368.6L723.1 368.3L725.5 367.6L724.8 363.5L729.1 362.5L729.2 359.7L728.4 357.1L731.6 356.6L734.8 356.3L732.4 355.4L729.9 354.8L727.4 354.9L725.5 352.0L725.8 348.9L725.2 345.9L726.9 343.7L728.5 341.4L730.5 339.4L728.2 338.3L726.2 336.7L725.5 339.8L724.1 342.7L722.2 345.3L719.9 347.5L719.4 349.7L719.1 352.0L722.0 355.1L720.4 357.1L719.3 359.3L718.4 361.7L717.0 363.7L715.6 365.6L713.2 366.8L712.8 364.2L712.0 361.7L710.6 357.7L709.9 356.3L707.9 358.1L706.4 360.4L703.5 359.6L702.4 357.3L702.1 354.9L702.4 351.9L702.4 349.0L704.7 346.9L706.4 344.3L708.7 342.9L710.6 341.1L711.8 338.9L712.5 336.5L713.5 334.2L714.1 331.9L715.6 329.9L716.3 327.6L717.6 325.8L719.4 324.4L720.6 322.5L722.9 321.6L724.8 320.0L726.7 318.7L728.6 317.6L730.5 316.6L732.9 317.2L735.5 317.0L737.1 319.4L739.0 321.6L741.9 323.7L744.1 323.9L746.1 324.9L748.1 326.0L749.9 327.5L751.2 329.5L753.2 330.6L752.6 333.3L752.5 336.0L749.8 335.8L747.4 334.5L744.7 334.2L743.9 336.8L744.0 339.4L745.7 341.2L747.5 342.7L750.0 341.8L752.5 341.1L754.2 339.4L755.6 337.4L757.5 336.0L757.0 333.6L758.0 331.2L757.5 328.7L761.7 329.5L763.9 329.0L766.0 328.2L768.3 327.9L770.3 326.8L772.6 326.4L775.1 326.4L777.4 325.7L779.0 323.8L780.2 321.6L783.1 321.8L785.9 322.2L788.7 322.9L790.7 325.1L792.3 327.6L792.1 325.4L792.5 323.1L792.3 320.9L792.5 318.7L792.3 316.4L793.2 314.2L792.7 312.0L793.0 309.7L795.5 309.0L798.0 308.3L797.9 310.6L797.5 312.9L798.0 315.3L797.5 317.6L797.9 319.9L797.9 322.2L797.9 324.5L798.0 326.8L800.1 329.9L800.2 327.6L801.3 325.5L801.7 323.2L802.1 321.0L803.5 319.0L803.6 316.7L804.5 314.6L805.3 312.5L805.8 310.2L807.6 307.6L809.3 304.9L811.6 304.1L813.9 303.6L816.2 303.0L818.5 302.4L818.5 299.9L817.8 297.6L819.7 296.2L821.9 295.6L823.7 294.2L825.8 293.2L828.0 292.6L829.9 291.4L832.3 290.8L834.6 290.2L837.0 289.6L838.8 287.5L840.5 285.4L841.7 282.9L843.4 280.7L844.3 283.7L845.5 286.5L848.4 287.1L851.2 287.8L854.0 288.4L854.2 290.8L854.7 293.1L854.9 295.5L855.3 297.8L855.1 300.2L855.7 302.6L856.2 304.9L858.7 306.1L861.2 307.0L864.0 307.4L866.5 307.8L868.9 308.8L871.3 309.9L873.9 310.2L875.4 312.5L877.5 314.3L879.5 315.6L881.0 317.4L883.2 316.4L885.5 316.1L887.7 315.2L890.0 314.7L892.4 314.3L894.0 312.2L896.3 310.8L898.1 308.8L899.9 310.2L901.8 311.4L904.2 311.8L905.9 313.4L908.0 314.3L910.0 315.5L912.2 316.1L913.9 317.8L915.9 318.9L918.3 319.3L920.0 321.0L922.2 321.6L924.5 321.4L926.7 321.5L929.0 321.9L931.3 321.6L933.6 321.2L936.1 321.0L938.5 321.4L941.0 321.5L943.5 321.6L945.9 322.8L948.4 324.0L950.6 325.7L952.6 327.2L954.2 329.1L956.3 330.6L958.7 331.6L960.5 333.4L962.7 334.6L964.8 336.0L963.5 338.0L961.6 339.5L959.8 341.1L957.0 340.1L954.1 339.4L950.6 339.4L950.1 342.1L950.1 344.9L949.2 347.5L946.7 347.8L944.4 348.8L942.1 349.9L939.9 351.2L938.6 353.5L936.4 354.9L933.6 355.3L930.8 355.7L927.9 355.4L926.9 357.8L926.5 360.4L926.0 362.8L925.0 365.1L924.4 367.8L923.2 370.3L922.2 372.9L920.3 374.2L918.7 375.8L917.2 377.5L916.7 375.2L916.4 372.8L916.9 370.3L916.3 368.0L916.0 365.6L917.1 363.5L917.9 361.2L918.8 359.0L920.1 357.1L921.8 355.5L922.9 353.4L920.6 354.2L918.4 355.3L915.9 355.1L913.7 356.3L911.3 356.3L908.9 356.3L906.6 356.8L903.7 357.2L900.9 356.5L898.1 356.8L897.2 359.0L895.3 360.5L894.4 362.7L893.3 364.7L891.9 366.6L890.4 368.4L889.5 370.5L892.7 371.5L895.6 372.9L895.7 375.6L895.1 378.2L895.1 380.9L894.5 383.5L893.4 385.5L891.9 387.4L890.6 389.3L889.1 391.0L887.4 392.7L885.0 393.6L882.4 394.2L880.8 396.5L878.9 398.4L878.5 400.7L878.9 403.1L878.6 405.4L878.2 408.5L874.6 409.7L874.6 407.1L874.6 404.5L872.5 400.9L870.0 400.7L867.5 399.9L867.7 402.0L865.1 402.0L862.6 401.8L864.7 405.4L869.0 405.6L867.9 407.9L866.1 409.7L867.3 412.6L868.0 415.7L868.2 417.6L867.5 420.1L865.8 422.1L864.8 424.5L863.0 426.0L861.1 427.5L858.8 428.9L856.2 429.7L854.0 430.6L851.9 431.5L850.5 430.7L847.6 430.7L845.5 433.8L846.5 436.0L848.6 437.5L849.6 439.7L849.5 442.7L850.1 445.6L846.7 447.3L843.8 449.7L844.1 447.0L840.5 444.5L838.1 442.7L837.1 444.9L835.9 447.0L836.8 449.2L837.7 451.3L839.6 453.9L842.0 456.0L843.1 460.0L842.0 460.2L838.4 458.2L837.0 455.7L835.9 453.1L834.6 450.6L834.9 447.4L834.9 444.1L834.8 441.1L833.7 438.2L831.5 438.8L829.2 439.0L828.8 434.8L826.1 431.5L825.4 429.2L822.1 430.3L818.3 431.5L815.7 433.9L813.5 435.9L811.9 438.2L808.9 439.7L809.0 443.4L808.3 447.3L806.5 448.8L805.0 450.6L803.3 448.4L802.4 446.0L801.2 443.7L800.2 441.5L799.4 439.3L798.7 436.5L798.4 433.8L798.1 430.7L795.1 431.8L793.0 429.3L790.9 426.9L789.4 424.7L786.6 425.3L783.8 425.0L781.2 425.1L778.8 424.8L776.4 424.1L775.1 422.0L772.7 421.8L770.3 422.2L768.5 420.5L767.1 418.5L763.9 417.3L763.2 418.5L765.3 422.2L767.1 425.3L768.3 426.1L771.7 426.7L772.8 424.8L774.5 423.3L775.2 426.1L777.8 427.3L779.9 429.2L778.2 431.3L777.1 433.8L774.8 435.4L773.1 437.5L770.9 438.2L768.8 439.3L766.5 440.9L763.9 442.1L761.5 443.1L758.9 443.7L756.5 443.8L755.6 439.7L754.1 436.8L752.9 433.8L751.6 431.9L750.4 430.0L748.7 427.4L747.5 424.5L746.2 422.6L745.0 420.6L744.6 418.1L743.7 415.2L744.7 412.3L746.1 408.9L746.4 406.1L744.0 405.7L740.4 406.8L738.3 406.3L734.8 405.7L732.3 402.7L732.2 399.9L732.2 398.6L729.1 398.4L727.2 399.4L728.2 401.4L728.8 403.6L727.0 406.3L725.2 403.9L723.4 400.9L723.4 398.6L722.4 396.5L720.3 394.5L717.7 393.3L716.0 391.5L714.3 389.9L712.5 389.7L712.8 392.3L714.9 395.2L717.7 397.5L721.3 399.6L718.4 402.0L717.3 403.6L717.3 399.9L714.9 398.7L712.8 397.1L709.9 394.2L707.5 391.5L704.9 393.1L701.4 393.3L699.3 394.2L699.5 396.4L696.1 398.4L695.0 401.2L694.3 403.2L692.2 405.9L688.6 406.1ZM686.5 374.8L686.5 371.7L686.2 370.5L683.5 369.6L684.5 367.6L682.9 368.1L680.8 370.1L681.5 372.9L680.4 375.7L682.9 376.2ZM880.9 410.1L883.1 408.0L888.1 407.3L889.5 405.4L893.1 403.0L893.8 399.0L895.9 397.3L896.6 400.9L895.2 404.5L894.9 408.0L893.5 408.9L891.7 409.4L889.3 410.1L887.4 411.3L886.7 409.6L883.9 410.1ZM893.8 396.2L895.5 397.1L898.5 396.2L901.6 393.7L900.2 392.3L896.4 389.5L895.9 393.3ZM879.3 411.8L881.0 410.8L882.3 412.3L881.3 415.2L879.9 415.3ZM883.1 412.3L886.3 410.6L885.6 412.0L883.9 412.6ZM896.6 388.3L898.8 387.2L898.1 382.0L900.2 382.0L897.8 369.8L896.9 375.3L896.4 383.0ZM865.5 428.4L866.8 425.0L868.1 425.3L866.5 430.0ZM849.2 434.2L851.9 432.9L852.6 433.8L850.5 435.7ZM808.3 450.6L808.9 448.0L811.2 451.3L810.0 453.5ZM865.4 439.0L866.3 435.3L868.5 435.3L868.2 438.2L871.1 444.1L866.8 441.9ZM868.2 452.0L870.4 449.6L873.2 448.2L874.6 451.3L873.2 453.7L870.4 451.3ZM868.2 447.7L871.1 445.6L873.2 446.3L871.8 448.0L869.7 448.9ZM830.3 454.0L833.5 454.6L837.7 459.2L842.7 463.4L845.5 466.3L845.2 470.3L843.4 470.4L839.8 467.7L837.7 463.4L834.9 459.9ZM844.4 471.7L848.4 470.8L852.6 471.1L855.2 472.0L857.6 473.1L857.6 474.4L852.6 473.7L846.2 472.5ZM858.3 473.7L864.0 473.8L869.7 473.7L872.5 473.7L871.8 475.3L864.0 474.8L859.7 474.5ZM870.4 476.7L875.3 474.0L874.6 474.8L871.1 476.7ZM849.8 459.9L851.2 464.1L852.6 466.3L857.6 467.4L860.4 466.3L859.7 463.4L862.6 460.6L862.3 455.9L864.0 454.5L861.1 452.0L859.0 454.5L855.5 457.7L852.6 459.4ZM864.7 469.8L866.1 465.6L867.5 468.4L869.7 468.8L867.5 463.4L872.5 459.9L866.1 460.6L864.0 463.4ZM876.0 462.7L877.5 459.9L876.8 458.7L876.5 461.3ZM881.0 463.7L885.3 463.4L890.2 464.1L895.2 465.7L900.9 468.0L902.3 469.8L904.9 470.5L903.7 472.7L908.0 476.7L903.7 476.3L899.5 473.0L897.4 475.3L893.8 473.7L891.0 473.8L890.7 469.8L884.6 467.7L882.4 466.0ZM905.9 469.8L908.7 469.8L910.8 468.0L911.3 469.1L908.7 471.0L905.9 470.5ZM940.7 514.3L943.5 517.7L948.5 519.7L947.0 522.6L945.6 525.0L943.5 526.9L942.9 523.1L941.8 522.6L942.8 518.6ZM940.2 525.0L942.5 526.9L940.7 530.7L937.8 532.7L935.0 537.0L931.4 535.7L934.3 531.7L938.5 527.5ZM711.3 275.2L714.9 282.1L718.4 287.8L719.9 282.1L717.0 276.6L720.6 273.1L724.8 266.2L719.1 263.0L713.5 265.4L710.6 269.3ZM769.5 317.4L773.1 318.3L776.6 317.9L774.5 309.7L774.5 304.9L777.4 299.7L781.6 294.2L785.9 291.4L792.3 286.5L790.1 284.6L783.0 285.9L777.4 290.2L773.1 295.9L771.0 303.4L771.0 309.7L768.8 314.3ZM763.2 262.1L768.8 263.8L771.7 258.7L766.0 255.2ZM829.9 271.6L837.0 278.7L844.1 275.2L842.7 259.6L832.7 255.2ZM888.1 302.4L896.6 305.9L908.0 298.1L900.9 291.4L891.0 291.4ZM949.2 316.6L954.1 316.6L953.4 313.9L949.2 313.9ZM740.9 409.4L743.3 408.9L744.0 407.8L741.9 408.4ZM728.4 408.4L732.3 408.7L731.9 408.4L729.1 407.8ZM712.6 403.6L717.2 403.0L716.3 405.9ZM706.9 401.8L708.9 401.6L708.8 397.9L706.6 398.3ZM439.4 645.3L482.0 632.6L524.6 619.1L553.0 616.6L588.5 616.6L598.4 595.3L602.7 588.0L614.1 578.1L609.8 588.0L607.0 603.2L624.0 645.3L652.4 632.6L680.8 611.9L695.0 608.3L723.4 607.4L744.7 605.7L758.9 595.3L780.2 591.6L794.4 597.2L808.6 593.4L837.0 588.0L865.4 589.8L893.8 589.8L908.0 595.3L922.2 603.2L936.4 611.9L950.6 645.3L950.6 716.8L439.4 716.8ZM774.5 261.3L781.6 262.1L785.9 257.0L778.8 253.3ZM722.7 267.8L727.7 270.1L733.3 263.8L726.2 259.6Z" fill="#e8e8e8"/>
<path d="M734.5 396.2L736.2 397.7L739.7 397.7L746.1 396.7L750.4 398.1L753.9 397.1L754.2 395.0L749.0 391.3L748.2 389.7L751.1 386.2L746.8 387.2L744.7 389.3L742.6 391.3L741.1 389.3L738.3 387.2L736.9 389.9L735.6 393.3ZM761.7 390.3L765.3 387.2L770.3 386.6L770.3 390.3L767.8 391.5L770.0 395.2L770.3 399.9L771.4 404.5L767.4 405.9L764.6 403.6L765.3 399.4L762.9 396.2L761.7 393.3ZM778.1 387.2L782.3 389.3L780.2 392.7L778.1 391.3ZM842.7 376.4L845.5 374.1L850.5 366.8L849.8 366.1L844.8 372.9L842.4 375.7ZM564.4 386.8L570.0 383.2L574.6 386.6L572.2 387.4L567.2 387.0ZM570.3 396.2L572.2 395.6L573.2 389.3L574.6 388.5L570.8 388.7L570.0 391.3ZM574.7 388.5L579.0 388.5L581.4 390.7L579.0 393.7L577.9 393.9L576.4 391.7L575.0 389.5ZM576.6 396.7L580.0 395.6L583.0 394.4L581.7 395.6L578.6 397.1ZM581.7 393.7L586.8 393.3L586.4 391.9L582.8 392.5Z" fill="#ffffff"/>
<path d="M592.8 444.8L592.0 449.2L595.6 452.8L599.1 453.5L598.7 459.2L595.6 460.6L596.3 468.0M609.8 449.9L609.8 454.9L606.2 456.3L602.7 460.6L599.9 459.2L596.3 463.4L595.6 467.7L591.3 472.7L592.0 476.3L596.3 477.7L601.3 476.0L602.7 479.2L608.4 482.1L609.8 485.8L612.6 491.0L616.2 494.0L617.6 499.5L613.4 506.7L619.0 512.9M581.0 466.8L584.2 466.3L588.5 463.4L591.3 464.8L595.6 467.7M582.8 459.9L585.7 461.3L588.5 462.0M596.3 477.7L597.0 483.5L595.6 487.2L597.7 494.0L597.7 501.8L595.6 511.7L594.2 524.1L592.8 535.7L591.3 544.2L597.0 548.7M597.7 494.0L606.2 494.0L612.6 491.0M606.2 494.0L612.6 501.8L617.6 499.5M614.1 453.5L614.1 459.2L611.2 459.9M618.3 453.7L618.3 458.9L621.2 458.4M692.2 408.7L692.9 414.0L687.9 418.1L682.6 421.4L682.6 425.3L678.0 427.7L676.5 431.0L670.9 431.5M707.1 405.7L706.4 412.3L708.5 417.3L709.2 425.3L712.0 427.7M678.0 427.7L686.5 425.6L687.9 438.2L678.0 441.2L671.3 444.3M688.2 425.3L696.4 431.5L700.7 433.8L712.0 427.7L716.3 428.4L729.1 433.8L730.5 433.0L730.5 430.0M730.5 414.3L730.5 430.0L747.5 430.0M716.3 428.4L717.0 433.0L714.2 441.9L717.0 447.7L726.2 446.3L728.4 449.9L729.1 444.8L726.2 440.5L729.1 433.8M728.4 449.9L733.3 454.9L739.0 456.7L743.3 455.6L745.4 454.9L744.0 450.6L743.3 447.0L746.8 441.5L749.7 436.0M729.1 444.8L733.3 447.7L737.6 448.0L741.9 447.7L743.3 447.0M700.7 433.8L696.4 440.5L700.0 445.6L714.9 443.4M678.7 444.1L683.6 447.7L687.9 447.0L690.7 446.3L695.0 446.3L700.0 445.6M682.9 455.6L683.6 447.7M691.0 454.9L690.7 446.3M696.4 453.5L695.0 446.3M698.8 453.0L700.0 445.6M707.1 455.6L709.2 452.0L712.0 449.9L715.6 444.1M708.9 458.9L711.3 458.9L717.7 459.2L720.6 457.0L727.7 455.5L733.3 454.9M739.0 456.7L736.9 463.4L736.9 468.4L738.3 473.4L735.5 477.7L730.5 478.4L726.2 477.7L717.7 472.7L712.3 470.5M726.2 480.6L726.2 488.0L730.5 487.7L737.6 485.0L741.9 482.1L744.7 478.4M711.8 486.5L723.4 488.0L723.4 494.0L723.4 498.2L723.4 504.3L718.4 504.3M723.4 498.2L730.5 499.5L736.2 494.8L739.7 494.5L740.4 501.5M741.9 486.5L740.4 492.5L739.7 494.5M736.9 463.4L743.3 463.4L751.1 468.4M743.3 455.6L753.2 456.3L753.2 464.4M753.2 456.3L757.5 455.0L763.2 450.6L756.1 445.6M682.5 396.2L685.1 396.4L685.8 397.7L685.1 401.8L684.5 405.0M704.9 388.5L709.9 387.2L714.5 387.2L718.4 387.2L721.3 388.7L724.8 388.3L727.0 391.3L727.0 396.2L724.1 396.2L722.4 396.5M714.6 382.4L717.7 383.0L721.7 380.9L727.0 382.0L727.0 384.1L732.6 383.7L735.0 389.3L727.0 391.3M715.7 373.9L716.3 377.5L721.7 380.9M727.0 382.0L729.1 378.7L728.4 375.3L728.4 370.1L724.8 365.6L732.6 366.3L734.8 365.1M725.5 361.7L734.0 361.7L734.8 356.3M728.4 376.2L740.4 375.3L744.7 377.5L751.8 379.8L749.0 385.8M727.7 397.7L732.6 396.5L734.8 396.5M712.0 357.7L712.8 350.5L715.6 339.4L719.1 326.8L724.1 324.9L729.1 336.7M724.8 324.9L728.4 328.7L729.1 336.7M734.8 353.4L737.6 349.0L737.6 330.6L736.2 322.0L739.0 321.6M746.4 406.1L754.6 405.4L758.2 404.8L758.2 400.9L753.9 397.1M753.9 397.1L761.0 397.7L765.3 399.4M749.0 391.3L751.8 393.3L761.0 396.5L763.2 396.2M758.2 404.8L760.3 408.9L762.9 414.8L763.9 417.3M744.7 418.1L747.5 417.3L750.4 413.2L754.6 415.7L761.0 418.6L763.2 418.5M746.1 412.3L750.1 411.8L753.2 409.7L754.6 405.4M756.1 437.5L761.7 437.5L768.8 434.5L773.8 429.2L774.5 423.3M771.5 404.8L775.9 403.6L781.6 406.3L781.6 414.8L784.5 418.1L782.3 425.0M781.6 417.6L789.4 418.1L793.7 414.8L795.8 410.6L796.5 406.3L800.8 405.4M781.6 406.3L788.7 404.5L795.8 405.7L800.8 405.4M765.3 387.2L767.4 378.2L773.1 378.0L781.6 377.5L781.6 370.5L793.0 367.3L799.4 371.0L803.6 370.5L808.6 377.5L818.5 382.0M770.3 396.2L774.5 390.3L778.1 389.3L781.6 392.3L788.7 395.2L793.0 397.1L795.8 395.6L800.1 393.7L808.6 394.6L809.3 390.3L812.9 386.2L816.4 386.2L818.5 382.0M771.5 404.8L773.8 397.7L778.1 395.2L781.6 398.1L788.7 404.5M791.6 403.6L795.8 400.9L800.8 399.9L799.4 405.4M818.5 382.0L822.8 378.7L834.2 375.7L839.8 376.4L848.4 380.9L857.6 379.3L861.1 379.8L865.4 374.1L872.5 372.9L876.0 380.2L880.3 383.5L886.7 383.5L883.9 390.3L881.0 394.6L878.9 395.2L871.8 399.9M818.5 382.0L824.2 389.3L832.0 394.6L844.1 397.1L853.3 393.3L857.6 389.7L862.6 386.8L865.0 385.2L861.1 379.8M800.8 405.4L807.2 408.0L806.5 413.2L810.0 417.0L820.0 420.7L825.6 420.9L832.7 420.2L834.9 424.5L838.4 430.0L845.5 428.7L848.4 430.7M791.6 427.3L795.8 426.1L795.1 421.4L800.1 416.5L800.8 412.3L804.3 408.9M808.9 419.4L820.0 423.0L821.4 422.5L821.4 430.0M825.6 420.9L830.6 421.4L829.2 426.9L826.1 431.5M834.9 424.5L838.4 432.2L834.9 437.5L834.9 444.1M838.4 430.0L844.1 435.3L847.6 440.5L845.5 445.6M838.4 432.2L842.7 436.8L844.8 441.2L840.5 444.5M837.4 452.8L839.8 453.5M874.2 403.9L877.5 403.0M528.7 413.2L532.0 413.2L537.4 415.2L541.4 414.3L543.8 414.3L546.6 417.6L548.7 418.9L550.9 417.6L552.3 419.7L554.4 422.8L556.8 423.7M564.4 441.2L565.8 436.3L568.3 436.3L568.3 439.1M568.1 441.3L570.8 439.3L574.3 440.7L576.9 440.5M573.3 446.1L576.1 446.3M577.1 449.9L577.3 448.3M895.1 465.7L895.2 475.0M857.6 455.5L859.0 456.0L861.9 456.0" fill="none" stroke="#bdbdbd" stroke-width="0.6"/>
<path d="M703.5 375.7L703.8 378.0L704.1 380.9L706.6 382.0L705.8 384.9L709.9 385.2L713.5 385.2L714.6 382.4L712.8 379.1L716.3 377.5L715.7 373.9L715.2 370.8L711.3 370.1L710.3 370.5L708.5 368.6L707.2 368.1L707.1 371.0L704.9 371.7L705.2 374.1Z" fill="#e6e6e6" stroke="#555" stroke-width="1"/>
<path d="M494.8 322.5L491.2 320.4L488.1 319.4L484.8 319.6L481.9 318.7L479.2 317.4L477.0 316.9L474.7 316.5L472.8 315.2L470.4 316.9L467.8 318.3L464.2 320.8L463.2 322.8L462.1 324.9L459.3 327.6L461.1 329.1L462.8 330.6L461.4 333.9L459.1 335.9L456.4 337.4L458.9 339.3L461.4 341.1L463.9 340.5L466.4 341.1L466.7 343.4L463.5 345.9L460.7 347.5L459.3 350.5L460.7 353.4L464.2 355.1L465.0 358.5L467.8 358.3L470.6 358.7L472.1 361.4L469.9 364.3L468.0 365.7L465.7 366.1L462.1 368.3L465.0 367.6L468.5 366.1L470.9 364.1L473.5 362.2L474.5 360.0L476.3 358.5L477.2 355.7L479.2 353.4L482.0 351.4L484.8 353.4L487.7 352.6L490.5 354.9L494.8 355.1L496.9 356.0L499.8 358.7L501.9 360.9L504.0 364.3L506.0 366.0L507.6 368.1L510.4 367.3L510.4 365.6L507.8 363.8L506.7 361.8L506.1 359.6L504.4 357.8L502.6 356.3L499.8 357.4L497.6 354.6L494.8 354.0ZM520.3 382.0L559.8 382.0L559.8 381.1L560.8 382.6L565.8 383.7L567.9 384.1L575.0 387.2L577.9 389.7L577.9 395.2L577.1 396.2L582.8 394.6L582.8 393.3L586.4 391.9L588.5 390.3L593.5 390.3L594.9 388.7L595.6 385.8L597.0 385.4L598.4 385.6L598.7 388.9L599.9 390.7L601.3 389.7L603.4 389.5L601.3 391.9L601.8 393.3L604.1 391.3L608.4 389.7L609.8 388.3L607.7 386.2L604.1 387.7L603.0 384.9L602.0 383.7L603.7 382.8L603.4 381.7L600.6 381.5L596.3 383.2L594.2 386.2L596.3 384.1L599.9 381.3L602.7 379.3L609.8 379.3L614.1 376.4L615.9 374.6L615.5 371.5L611.9 369.3L609.1 366.1L607.2 362.5L606.1 360.3L604.8 358.2L604.4 356.0L603.4 354.0L602.0 357.1L599.1 359.6L596.3 357.7L596.6 355.0L595.6 352.6L593.3 350.7L591.3 348.4L588.1 348.6L585.0 347.5L586.8 350.3L584.2 352.6L583.8 355.2L584.3 357.8L585.0 360.4L586.1 362.9L585.9 365.6L584.4 367.4L582.8 369.3L583.5 376.4L580.7 376.9L577.9 373.4L574.3 367.3L572.1 365.4L569.3 364.3L566.5 363.3L563.6 362.5L562.7 359.9L561.1 357.7L559.7 354.9L560.8 352.0L560.4 348.5L563.6 347.5L566.5 344.3L568.7 342.8L570.8 341.1L571.7 338.9L570.1 335.9L572.9 334.2L575.7 332.4L578.6 330.6L578.8 328.0L578.1 325.4L577.9 322.9L574.3 321.6L573.5 323.9L572.6 326.0L570.0 326.8L567.2 324.9L564.0 323.5L564.4 320.0L563.9 317.3L561.8 315.4L560.8 313.0L559.4 314.3L558.9 317.0L558.8 319.6L560.3 322.3L558.7 324.9L556.9 326.5L555.8 328.7L553.2 330.3L550.2 329.5L548.0 328.6L546.6 326.6L544.5 325.7L540.9 328.0L538.6 329.1L536.0 329.5L531.7 328.7L529.5 326.4L527.4 324.1L525.0 323.4L523.2 321.6L520.5 322.8L517.5 322.9L514.4 322.8L513.2 320.0L510.4 320.8L508.0 321.3L506.1 322.9L504.1 324.1L501.9 325.3L499.5 324.5L497.6 322.9L494.8 322.5L494.8 354.0L497.6 354.6L499.8 357.4L502.6 356.3L504.7 357.5L506.1 359.6L507.6 361.4L507.8 363.8L510.4 365.6L510.4 367.3L511.1 370.5L513.2 374.1L514.0 377.5L517.5 379.8L519.6 381.5ZM607.2 333.9L608.9 337.9L604.8 339.4L604.3 341.7L603.3 343.8L602.2 345.9L602.7 348.4L600.6 349.6L596.8 350.2L595.6 346.5L593.6 345.0L591.2 344.1L589.9 341.8L587.4 341.9L585.0 341.1L586.7 338.3L589.9 337.7L587.4 333.8L591.3 331.4L590.1 328.9L587.6 327.4L586.4 324.9L583.7 323.1L581.4 320.8L579.4 319.7L577.1 319.3L573.8 321.2L572.9 317.4L571.2 315.8L569.8 313.9L567.2 312.9L567.9 309.7L570.8 308.7L572.7 306.4L574.3 303.9L576.6 305.1L579.0 304.3L581.4 304.4L584.4 305.8L585.7 308.8L587.5 310.1L589.0 311.9L591.7 312.0L592.8 314.3L595.2 315.0L596.8 316.9L598.4 318.7L598.5 321.6L600.5 324.0L600.6 326.8L602.6 328.1L605.2 328.7L605.5 331.7ZM550.9 322.9L549.5 325.2L547.3 326.8L544.5 326.7L541.7 325.8L538.8 326.4L535.6 327.1L533.1 324.9L530.1 323.5L528.1 320.8L526.9 318.8L526.7 316.6L526.7 314.3L528.9 313.4L529.9 311.2L531.7 309.7L533.9 308.6L536.0 307.4L538.1 305.3L540.9 306.4L544.5 306.4L545.9 309.7L547.1 312.2L549.2 314.0L550.2 316.6L551.0 319.6ZM529.1 314.3L526.9 314.9L524.6 315.2L522.5 313.6L519.0 315.0L517.5 312.1L518.4 309.4L516.2 306.6L518.8 304.1L518.2 301.3L520.9 301.1L523.2 299.7L526.4 299.3L528.9 301.3L529.9 304.3L531.0 307.4L529.6 309.5L529.5 311.9ZM607.0 242.4L605.0 241.2L602.5 240.8L600.9 239.1L599.6 236.9L596.9 236.8L595.6 234.7L593.2 234.3L590.9 237.3L588.5 234.4L586.1 235.4L583.8 235.9L581.4 234.7L579.9 236.5L578.0 237.9L576.7 240.0L575.6 242.1L573.1 243.1L572.9 246.1L570.0 246.7L569.2 249.2L567.2 250.5L565.4 252.4L566.9 255.4L565.3 257.4L564.4 259.6L566.0 261.3L565.7 263.9L567.9 265.3L568.6 267.4L569.7 269.3L570.0 271.6L570.3 273.9L570.7 276.2L573.3 277.6L573.6 279.9L574.3 282.1L577.6 282.5L577.7 285.4L579.9 286.7L580.0 289.6L581.9 287.8L584.2 286.5L585.0 283.8L585.1 281.2L583.5 278.7L583.2 274.5L585.5 273.0L589.2 273.1L591.3 271.6L591.1 268.8L593.2 267.3L592.0 263.9L595.4 263.2L598.0 262.0L598.4 259.6L597.3 256.3L600.3 255.2L600.9 252.8L600.6 250.0L604.5 249.2L603.3 246.0L606.9 245.1ZM581.4 299.7L579.1 299.2L576.7 300.1L574.4 298.8L572.1 300.2L569.7 300.1L567.4 300.7L565.1 299.7L565.7 297.1L563.0 294.7L564.4 291.9L566.5 289.8L568.6 287.8L571.4 288.9L574.3 287.7L577.1 288.4L579.3 290.4L581.4 292.5L582.0 294.9L580.9 297.3ZM572.9 278.7L570.2 277.5L567.1 277.7L564.4 276.6L563.5 274.6L560.9 273.0L561.3 270.6L562.0 268.1L562.2 265.7L561.6 263.6L558.1 262.3L559.4 259.6L561.3 258.1L562.2 255.6L564.4 254.4L565.8 252.4L567.0 254.9L571.0 255.4L570.9 258.8L572.2 261.3L572.5 263.8L573.0 266.2L575.0 268.7L572.4 271.3L572.9 273.7L572.8 276.2ZM558.0 313.0L554.8 312.6L551.6 313.0L550.9 310.1L549.7 307.4L552.2 306.2L553.5 303.6L555.8 302.4L559.4 304.9L559.0 307.6L558.0 310.2ZM562.9 312.1L559.4 309.7L559.9 307.3L560.0 304.8L559.4 302.4L562.6 301.7L565.8 302.4L566.4 305.3L566.5 308.3L565.1 310.6ZM545.9 297.0L543.6 298.2L540.9 298.2L538.5 299.3L536.0 299.7L533.8 298.4L532.0 296.6L529.2 296.2L527.4 294.2L527.6 291.4L529.1 289.5L531.7 288.4L534.1 287.9L536.0 285.7L538.8 286.5L541.7 287.0L542.9 289.3L544.5 291.4L546.4 293.9ZM555.8 297.0L553.4 296.4L551.1 295.5L548.7 294.8L549.9 292.7L550.1 290.3L551.6 288.4L554.2 288.5L556.5 289.6L556.0 292.0L556.2 294.6ZM562.9 297.0L558.0 295.9L560.1 291.9L562.9 293.7ZM531.7 288.4L529.5 289.6L527.1 290.6L524.6 291.4L523.2 289.4L521.0 288.4L522.5 286.6L524.3 285.3L525.7 283.5L527.4 282.1L529.0 284.1L529.9 286.6ZM555.8 285.3L553.6 283.8L550.8 283.8L548.3 283.3L545.9 282.1L546.6 279.5L546.2 276.8L546.3 274.1L547.3 271.6L549.4 273.3L552.1 273.9L554.4 275.2L554.3 277.8L555.3 280.2L555.0 282.8ZM580.7 344.3L578.2 345.5L575.7 346.5L573.2 345.0L571.5 342.7L571.4 340.0L572.9 337.7L575.7 336.0L577.4 338.1L579.3 340.1L579.8 342.3ZM620.2 385.2L619.0 386.8L616.2 386.2L614.8 384.9L610.8 384.9L611.9 382.0L613.4 378.2L616.0 376.2L615.8 379.8L618.3 380.9L619.7 383.0ZM519.9 383.5L517.5 382.4L512.5 378.2L514.7 378.0L518.9 380.9ZM508.3 375.3L506.9 371.7L506.1 370.5L507.6 370.5L508.7 372.9ZM604.1 387.4L607.0 388.3L606.7 387.2L603.8 386.4ZM603.8 381.5L607.2 381.7L606.2 380.7L603.6 380.0ZM520.3 382.0L522.7 382.2L525.0 381.7L527.3 382.0L529.6 381.9L532.0 382.0L534.3 381.7L536.6 381.8L538.9 382.0L541.2 382.3L543.6 381.7L545.9 382.0L548.2 382.2L550.5 382.3L552.8 381.7L555.2 381.7L557.5 382.3L559.8 382.0L559.8 381.1L560.8 382.6L563.2 383.5L565.8 383.7L567.9 384.1L570.3 385.1L572.8 385.9L575.0 387.2L577.9 389.7L577.6 392.4L577.9 395.2L577.1 396.2L580.0 395.3L582.8 394.6L582.8 393.3L586.4 391.9L588.5 390.3L591.0 390.6L593.5 390.3L594.9 388.7L595.6 385.8L597.0 385.4L598.4 385.6L598.7 388.9L599.9 390.7L597.7 391.7L594.9 393.7L594.5 395.8L595.6 396.5L593.5 397.5L589.9 398.8L589.9 400.9L587.8 402.7L587.1 405.4L587.8 408.0L586.4 409.6L584.2 411.0L582.5 412.3L580.0 414.3L579.6 417.3L580.7 420.1L581.4 423.0L580.7 425.0L579.7 424.8L578.8 423.0L577.6 420.6L577.4 418.1L575.7 417.3L572.9 416.7L569.3 416.7L568.2 418.5L566.5 418.8L564.4 418.0L561.5 418.0L560.1 418.6L557.3 420.9L556.8 423.7L554.4 422.8L552.3 419.7L550.9 417.6L548.7 418.9L546.6 417.6L543.8 414.3L541.4 414.3L537.4 415.2L534.7 414.1L532.0 413.2L528.7 413.2L526.7 410.6L523.7 409.6L521.9 406.3L521.0 404.5L519.2 400.9L518.5 399.0L518.6 396.2L519.0 393.7L518.9 391.3L518.9 387.7L518.2 385.5L517.9 383.2L520.3 383.7L520.8 382.4ZM473.8 432.7L474.9 433.9L473.6 434.7L473.3 433.5ZM470.4 430.6L471.1 431.0L473.1 432.1L472.5 431.3ZM599.6 435.3L601.8 435.4L601.7 436.0L599.6 436.0ZM686.9 379.5L689.3 378.9L692.9 378.2L696.8 377.1L697.4 373.9L695.4 372.0L694.7 370.1L692.9 368.1L692.2 365.8L690.7 365.6L692.4 361.7L690.0 361.2L690.6 358.7L687.9 358.7L687.0 361.7L686.5 363.5L687.2 366.8L688.2 368.6L690.5 368.6L690.2 370.5L690.9 372.2L688.3 373.4L689.3 375.3L687.5 375.9L690.3 376.6L687.2 379.3ZM687.2 369.8L686.2 367.3L684.5 367.6L683.5 369.6L685.8 370.5ZM693.2 355.1L693.6 352.6L692.9 353.4ZM692.4 393.5L693.3 389.3L691.9 386.2L688.6 384.5L688.3 382.8L692.4 382.6L693.2 380.4L695.3 380.9L697.3 377.8L698.5 377.3L701.0 379.8L701.8 379.8L704.1 380.9L706.6 382.0L705.8 384.9L703.5 387.7L704.9 388.7L704.4 390.3L704.9 391.9L705.6 392.7L703.5 394.0L701.4 393.3L699.3 394.2L699.5 395.2L697.1 395.2L694.3 394.6ZM707.2 394.4L708.5 394.4L708.3 397.3L707.5 397.1ZM856.2 494.0L856.3 497.2L856.9 500.3L857.8 503.0L858.3 505.9L858.6 508.1L858.5 510.3L859.0 512.5L858.3 513.9L860.4 514.8L862.6 515.1L864.6 513.9L866.8 513.0L868.9 512.2L871.1 511.7L873.9 510.3L878.2 509.5L881.7 509.2L885.3 511.4L886.6 513.2L887.8 515.1L890.2 512.5L890.7 516.2L893.2 517.7L894.5 520.4L896.6 521.2L898.8 521.9L902.7 522.4L905.2 520.1L908.0 519.5L908.5 516.9L909.1 514.3L910.1 512.0L911.5 510.0L912.1 507.1L913.0 504.3L912.8 501.4L912.3 498.7L910.9 496.5L909.1 494.8L907.3 492.5L904.9 490.9L903.0 488.7L902.4 486.1L901.6 483.5L898.8 482.1L898.3 479.6L897.4 477.3L896.1 480.6L896.4 483.2L895.9 485.8L893.8 487.5L890.2 485.0L887.8 483.5L889.3 479.5L887.4 479.2L883.9 478.4L881.0 479.5L879.7 481.4L878.9 483.5L876.5 482.4L873.9 482.1L871.8 485.8L868.7 488.0L866.8 490.2L864.8 491.2L862.6 491.6L860.4 492.1L857.6 493.7ZM900.5 525.4L905.6 525.7L905.2 530.1L903.3 530.9L901.3 528.8ZM462.1 368.3L458.6 370.5L455.7 372.2L454.3 372.7L456.4 371.5L460.0 369.8ZM453.6 373.2L450.1 374.6L447.2 375.3L443.7 375.9L440.1 376.2L438.7 376.6L441.5 375.5L446.5 374.8L450.8 373.9ZM474.9 362.5L478.5 362.0L478.0 359.6L475.6 360.4ZM505.4 367.6L507.6 366.8L504.7 362.2L501.9 359.8L502.6 362.5L504.0 365.1ZM508.3 368.6L509.3 367.6L506.9 364.3L506.1 366.1Z" fill="#dcc3b6" stroke="#5c5c5c" stroke-width="0.85" stroke-linejoin="round"/>
<g transform="translate(0.0,0)"><path d="M607.0 242.4l-3.7 2.1M605.0 241.2l-2.6 2.0M602.5 240.8l-2.5 2.3M599.6 236.9l-0.5 1.7M593.2 234.3l-4.1 1.5M586.1 235.4l2.2 2.2M583.8 235.9l1.2 1.9M581.4 234.7l0.5 2.8M578.0 237.9l0.1 3.0M575.6 242.1l3.5 2.9M569.2 249.2l2.4 0.2M567.2 250.5l1.6 2.2M566.9 255.4l2.2 3.4M565.3 257.4l3.8 -1.9M564.4 259.6l1.9 1.9M566.0 261.3l3.8 0.3M565.7 263.9l1.3 -2.1M569.7 269.3l0.8 -1.6M570.0 271.6l2.0 -0.4M570.7 276.2l0.3 -3.7M573.3 277.6l1.3 -1.3M573.6 279.9l-0.2 -2.3M577.7 285.4l1.7 -1.3M579.9 286.7l2.4 -2.4M580.0 289.6l1.8 -1.1M581.9 287.8l1.3 -2.1M584.2 286.5l-1.2 -1.3M585.1 281.2l0.4 -2.6M583.5 278.7l2.2 -1.9M589.2 273.1l-3.5 -2.4M591.1 268.8l-3.4 -1.5M592.0 263.9l-0.7 -4.1M598.0 262.0l-1.4 0.7M597.3 256.3l-2.2 -0.5M600.6 250.0l-1.8 3.2M604.5 249.2l-1.9 2.5M607.2 333.9l-0.8 -2.0M608.9 337.9l-2.8 -0.4M604.8 339.4l-2.6 -0.4M603.3 343.8l-3.3 -2.6M595.6 346.5l-1.4 -0.7M587.4 341.9l1.0 -2.8M586.7 338.3l1.5 -0.8M581.4 320.8l2.7 3.2M577.1 319.3l2.2 3.4M571.2 315.8l2.7 2.0M569.8 313.9l3.1 3.2M570.8 308.7l1.3 3.0M572.7 306.4l0.2 1.7M576.6 305.1l1.1 2.7M579.0 304.3l0.3 3.0M585.7 308.8l2.1 1.1M589.0 311.9l2.4 3.5M592.8 314.3l-2.1 1.3M596.8 316.9l-2.2 3.2M600.5 324.0l-2.4 -0.0M600.6 326.8l-4.0 -0.4M581.4 299.7l-2.8 0.2M579.1 299.2l-2.7 -0.3M572.1 300.2l3.2 -3.1M567.4 300.7l-0.3 -4.1M565.1 299.7l3.2 -0.5M565.7 297.1l1.5 0.4M563.0 294.7l1.6 -0.1M566.5 289.8l1.6 0.0M580.9 297.3l-2.0 -0.5M572.9 278.7l-1.7 -3.2M570.2 277.5l-1.6 -1.9M561.3 270.6l4.2 -0.7M562.0 268.1l3.4 1.4M562.2 265.7l3.4 0.0M558.1 262.3l3.5 2.1M565.8 252.4l-1.3 3.7M570.9 258.8l-4.2 1.5M575.0 268.7l-2.1 -3.5M572.4 271.3l-2.8 0.0M549.5 325.2l-0.6 -1.6M544.5 326.7l-2.8 -2.6M541.7 325.8l-2.5 -1.8M526.7 316.6l2.7 -1.4M547.1 312.2l-4.4 -0.5M551.0 319.6l-2.9 -0.8M526.9 314.9l1.3 -2.7M516.2 306.6l2.7 0.6M526.4 299.3l-0.6 3.9M529.6 309.5l-3.8 -2.0M529.5 311.9l-0.7 -1.4M545.9 297.0l-3.5 0.3M536.0 299.7l1.0 -1.6M532.0 296.6l1.2 -2.8M531.7 288.4l3.3 0.7M544.5 291.4l-3.8 -0.8M572.9 337.7l3.3 1.5M577.4 338.1l-2.3 1.5M579.8 342.3l-3.6 0.0M604.4 356.0l-3.0 1.8M596.3 357.7l-3.8 -0.2M593.3 350.7l-1.0 1.5M591.3 348.4l-3.0 0.6M585.0 347.5l-1.2 1.8M561.1 357.7l1.9 -3.9M571.7 338.9l-2.5 3.1M570.1 335.9l-0.4 3.7M575.7 332.4l0.6 3.0M578.6 330.6l-3.6 1.5M550.2 329.5l2.1 2.0M548.0 328.6l2.5 2.3M510.4 320.8l2.7 2.6M504.1 324.1l2.6 -0.2M501.9 325.3l4.2 -0.0M504.7 357.5l3.7 0.6M558.0 313.0l0.4 -1.9M551.6 313.0l1.9 -2.8M550.9 310.1l2.6 1.0M555.8 302.4l-1.4 2.9M559.4 304.9l-2.3 0.6M559.0 307.6l-1.3 0.9M558.0 310.2l-1.4 -2.3M559.9 307.3l3.6 2.5M560.0 304.8l0.9 2.7M565.8 302.4l-2.7 3.4M551.1 295.5l2.1 -1.9M548.7 294.8l0.9 -2.9M549.9 292.7l3.5 -0.4M551.6 288.4l0.5 2.7M553.6 283.8l-3.9 -1.4M546.6 279.5l3.1 0.6M549.4 273.3l2.8 3.4M554.3 277.8l-1.1 2.0" stroke="#6a6a6a" stroke-width="0.8" fill="none"/></g>
<path d="M564.4 386.8L570.0 383.2L574.6 386.6L572.2 387.4L567.2 387.0ZM570.3 396.2L572.2 395.6L573.2 389.3L574.6 388.5L570.8 388.7L570.0 391.3ZM574.7 388.5L579.0 388.5L581.4 390.7L579.0 393.7L577.9 393.9L576.4 391.7L575.0 389.5ZM576.6 396.7L580.0 395.6L583.0 394.4L581.7 395.6L578.6 397.1ZM581.7 393.7L586.8 393.3L586.4 391.9L582.8 392.5Z" fill="#ffffff" stroke="#777" stroke-width="0.6"/>
<path d="M1102.5 275.2L1103.5 273.1L1104.6 271.0L1106.5 269.5L1106.9 267.0L1108.8 265.5L1109.8 263.4L1110.6 261.2L1112.5 259.6L1113.7 257.6L1114.3 255.2L1116.0 253.5L1116.8 251.2L1118.0 249.2L1119.7 247.5L1121.0 245.6L1123.3 245.2L1125.0 243.3L1127.2 242.6L1129.6 242.3L1131.9 241.9L1133.8 240.5L1135.8 239.4L1138.3 239.4L1139.9 237.1L1142.3 237.0L1144.6 236.7L1146.4 235.0L1148.5 233.9L1150.6 233.1L1152.8 232.5L1155.3 232.4L1157.0 230.6L1159.4 230.4L1161.6 229.7L1163.6 228.6L1165.2 230.2L1166.4 232.1L1168.4 233.3L1169.8 234.9L1171.1 236.8L1171.9 239.0L1173.6 240.4L1175.2 242.0L1176.3 244.0L1177.8 245.6L1180.1 246.5L1182.5 247.2L1184.4 249.0L1186.8 249.8L1189.2 250.5L1188.5 252.8L1186.9 254.8L1185.9 257.0L1184.4 258.9L1183.5 261.1L1183.1 263.6L1181.0 265.3L1180.6 267.8L1181.0 270.3L1180.4 272.8L1179.6 275.2L1180.4 277.8L1179.6 280.3L1180.2 282.8L1179.2 285.3L1178.5 287.7L1178.0 290.1L1177.9 292.6L1177.0 294.9L1177.5 297.5L1176.5 299.9L1176.4 302.4L1175.8 304.7L1175.4 307.1L1175.2 309.6L1174.1 311.8L1174.2 314.3L1172.4 316.2L1171.9 318.7L1170.7 320.8L1168.7 322.4L1167.6 324.9L1165.1 326.0L1163.6 328.0L1161.6 329.8L1159.5 331.5L1157.9 333.7L1156.5 336.0L1154.3 337.7L1151.9 338.9L1149.4 340.1L1148.3 342.2L1148.3 344.8L1146.8 346.8L1145.8 349.0L1145.3 352.1L1143.7 354.9L1141.2 353.9L1139.5 352.0L1137.1 349.6L1135.9 346.5L1135.2 344.1L1133.8 342.1L1132.2 339.2L1131.7 336.0L1130.5 333.4L1130.2 330.6L1131.3 328.0L1133.1 325.7L1133.8 322.9L1130.9 321.3L1128.8 318.7L1128.5 316.5L1128.4 314.3L1128.1 312.1L1128.1 309.5L1127.5 307.0L1127.0 304.5L1125.5 302.3L1125.3 299.7L1124.1 297.4L1122.9 295.0L1122.6 292.3L1121.0 290.2L1118.1 289.6L1115.4 291.1L1112.5 290.8L1110.3 289.3L1108.6 287.4L1106.8 285.5L1105.4 283.4L1104.4 280.7L1103.6 277.9ZM1174.2 342.7L1172.1 337.7L1175.0 334.6L1180.6 335.7L1184.9 334.2L1187.0 338.8L1184.9 341.8L1179.9 344.7ZM1039.9 413.2L1043.2 413.2L1045.9 414.0L1048.6 415.2L1052.6 414.3L1055.0 414.3L1057.8 417.6L1059.9 418.9L1062.1 417.6L1063.5 419.7L1065.6 422.8L1068.0 423.7L1067.8 426.9L1067.5 430.0L1068.5 432.2L1069.9 434.5L1072.0 435.7L1075.6 435.1L1077.7 433.8L1078.0 431.5L1080.3 430.8L1082.7 430.7L1082.0 433.8L1081.0 436.8L1080.8 439.0L1084.1 439.1L1086.9 439.3L1087.9 441.2L1087.8 443.7L1087.6 446.3L1089.0 448.4L1090.5 449.2L1093.3 448.4L1096.2 449.7L1094.7 450.6L1092.6 451.6L1090.5 450.9L1088.3 450.0L1084.8 448.4L1084.4 446.3L1082.0 443.4L1079.1 442.7L1076.3 441.9L1074.1 439.6L1071.6 438.8L1069.2 439.6L1066.3 438.7L1062.8 437.2L1059.2 435.6L1056.4 432.6L1056.7 430.7L1055.7 428.7L1054.2 427.1L1052.8 425.3L1050.7 423.0L1048.6 421.4L1046.5 418.1L1043.6 415.3ZM1043.2 414.5L1044.0 417.3L1046.5 420.6L1050.0 426.4L1050.7 428.1L1049.6 427.7L1047.2 425.6L1044.3 420.9L1042.2 418.1L1040.5 414.8L1039.9 413.2ZM1085.5 430.1L1089.8 428.1L1092.6 428.3L1096.9 430.3L1100.8 432.7L1096.2 433.2L1094.7 430.7L1090.5 429.7L1086.9 430.1ZM1100.4 435.4L1102.8 433.2L1106.8 433.5L1109.1 435.3L1105.4 435.7L1103.2 435.7ZM1095.0 435.6L1097.9 436.0L1097.1 436.3L1095.4 435.9ZM1096.4 450.6L1098.3 448.4L1099.0 446.9L1101.8 445.8L1104.0 444.4L1105.0 446.3L1106.8 444.5L1109.6 447.0L1113.9 447.6L1118.2 446.7L1119.6 448.4L1121.0 449.9L1122.7 451.7L1124.5 453.5L1127.0 453.9L1129.5 453.7L1133.1 456.0L1135.2 459.4L1135.2 462.0L1137.3 463.4L1140.1 464.5L1143.0 465.3L1145.5 465.7L1148.0 466.1L1151.5 467.4L1153.8 468.7L1156.2 469.8L1156.8 472.7L1155.8 475.6L1153.7 477.7L1151.1 480.6L1150.9 482.8L1151.2 485.1L1150.8 487.2L1149.5 489.4L1148.7 491.8L1146.6 495.6L1143.0 495.9L1139.5 497.9L1137.3 501.0L1137.0 504.3L1135.6 506.2L1134.5 508.3L1132.9 510.3L1131.7 512.5L1129.5 514.8L1126.0 514.8L1123.1 514.3L1125.3 517.7L1124.5 520.8L1121.3 521.3L1118.2 522.2L1117.9 525.0L1113.9 525.9L1113.9 528.8L1115.6 529.4L1114.5 531.6L1113.2 533.7L1110.3 536.8L1112.8 539.5L1111.5 541.3L1110.4 543.2L1108.9 544.9L1108.2 548.1L1108.9 549.9L1108.8 552.8L1108.8 555.7L1111.8 555.9L1109.3 556.5L1106.8 556.4L1104.0 553.5L1101.9 551.3L1100.4 548.7L1099.7 546.2L1099.2 543.6L1099.0 541.0L1100.0 538.3L1101.1 535.7L1101.2 532.7L1101.8 529.8L1101.4 525.9L1101.3 523.1L1101.8 520.4L1102.3 518.0L1103.0 515.6L1103.9 513.2L1104.7 510.8L1104.7 506.7L1104.5 504.2L1105.0 501.8L1105.8 499.1L1106.1 496.3L1106.3 494.1L1106.1 491.8L1106.5 489.5L1106.1 488.0L1102.5 485.5L1100.3 483.9L1098.3 482.1L1096.6 479.2L1095.2 476.7L1094.0 474.1L1092.5 472.4L1091.2 470.5L1090.9 468.4L1092.6 466.3L1091.5 464.1L1092.6 460.9L1094.3 459.9L1096.2 457.0L1096.4 453.5L1095.7 451.7ZM1198.0 407.5L1200.7 407.9L1203.4 408.7L1205.6 407.7L1207.6 406.3L1210.5 406.3L1213.3 405.7L1215.7 405.5L1218.0 405.2L1220.4 405.0L1221.8 405.7L1221.1 408.0L1221.8 411.5L1224.0 412.6L1227.9 413.7L1230.7 415.0L1233.2 416.8L1234.6 415.7L1234.6 413.2L1238.2 412.6L1241.7 414.3L1244.6 414.9L1247.4 416.0L1249.7 415.5L1252.1 415.2L1254.8 415.3L1255.8 418.1L1252.5 417.5L1253.3 419.8L1253.8 422.2L1255.0 424.8L1256.6 427.2L1258.0 429.2L1259.0 431.5L1260.2 433.6L1260.9 436.0L1262.3 439.7L1265.1 442.7L1267.7 444.1L1269.4 447.0L1271.8 446.8L1274.0 446.0L1276.3 445.3L1278.6 445.0L1278.9 447.0L1277.7 449.9L1276.5 452.8L1274.9 454.7L1272.9 456.3L1271.3 458.2L1269.4 459.9L1268.0 462.0L1265.1 464.6L1262.7 467.7L1261.9 471.2L1262.6 474.2L1263.7 477.0L1263.7 480.3L1263.9 483.5L1261.4 485.5L1258.7 487.2L1257.4 489.2L1255.9 491.0L1256.5 493.6L1256.6 496.3L1254.6 498.0L1252.8 499.9L1252.3 504.3L1250.9 506.3L1249.5 508.3L1247.3 510.3L1245.2 512.5L1241.7 513.4L1238.2 513.4L1234.6 514.8L1232.2 513.4L1231.5 510.0L1230.5 507.2L1229.6 504.3L1228.4 502.3L1227.5 500.3L1227.3 497.5L1226.8 494.8L1224.7 491.0L1224.1 488.6L1223.0 486.5L1223.4 484.3L1223.5 482.1L1224.8 479.8L1225.7 477.4L1224.7 473.4L1223.5 470.5L1221.8 467.9L1219.7 465.6L1219.4 461.3L1220.1 457.7L1218.3 455.6L1214.0 456.0L1211.9 453.0L1207.6 453.5L1205.4 454.2L1203.4 455.2L1199.1 454.7L1195.5 455.7L1192.7 454.2L1189.9 452.3L1187.7 450.6L1187.0 448.4L1184.9 446.6L1182.5 444.4L1181.6 440.9L1183.1 437.5L1183.3 433.8L1182.1 431.5L1183.3 428.7L1184.9 426.1L1186.0 424.1L1187.0 422.2L1189.5 420.5L1192.0 418.9L1192.3 415.7L1194.1 411.8L1197.0 409.7ZM1276.2 479.2L1277.9 484.3L1276.5 488.0L1274.4 494.8L1272.9 498.7L1270.1 499.5L1268.4 495.6L1268.7 491.0L1269.1 486.5L1272.2 484.7L1274.4 482.1ZM1198.2 407.1L1195.7 406.7L1193.6 405.4L1192.7 401.8L1192.7 398.9L1193.7 396.2L1193.0 393.9L1194.8 392.9L1197.7 392.9L1200.5 393.5L1203.6 393.5L1204.5 389.3L1203.1 386.2L1199.8 384.5L1199.5 382.8L1203.6 382.6L1204.4 380.4L1206.5 380.9L1208.5 377.8L1211.2 376.6L1212.6 375.3L1213.3 372.2L1216.1 371.7L1218.3 371.0L1218.4 366.8L1217.8 363.5L1221.1 361.4L1221.1 365.6L1220.4 368.1L1222.5 369.8L1226.1 370.5L1228.8 369.3L1231.8 368.6L1234.3 368.3L1236.7 367.6L1236.0 363.5L1240.3 362.5L1240.4 359.7L1239.6 357.1L1242.8 356.6L1246.0 356.3L1243.6 355.4L1241.1 354.8L1238.6 354.9L1236.7 352.0L1237.0 348.9L1236.4 345.9L1238.1 343.7L1239.7 341.4L1241.7 339.4L1239.4 338.3L1237.4 336.7L1236.7 339.8L1235.3 342.7L1233.4 345.3L1231.0 347.5L1230.6 349.7L1230.3 352.0L1233.2 355.1L1231.6 357.1L1230.5 359.3L1229.6 361.7L1228.2 363.7L1226.8 365.6L1224.4 366.8L1224.0 364.2L1223.2 361.7L1221.8 357.7L1221.1 356.3L1219.1 358.1L1217.6 360.4L1214.7 359.6L1213.6 357.3L1213.3 354.9L1213.6 351.9L1213.6 349.0L1215.9 346.9L1217.6 344.3L1219.9 342.9L1221.8 341.1L1223.0 338.9L1223.7 336.5L1224.7 334.2L1225.3 331.9L1226.8 329.9L1227.5 327.6L1228.8 325.8L1230.6 324.4L1231.8 322.5L1234.1 321.6L1236.0 320.0L1237.9 318.7L1239.8 317.6L1241.7 316.6L1244.1 317.2L1246.7 317.0L1248.3 319.4L1250.2 321.6L1253.1 323.7L1255.3 323.9L1257.3 324.9L1259.3 326.0L1261.1 327.5L1262.4 329.5L1264.4 330.6L1263.8 333.3L1263.7 336.0L1261.0 335.8L1258.6 334.5L1255.9 334.2L1255.1 336.8L1255.2 339.4L1256.9 341.2L1258.7 342.7L1261.2 341.8L1263.7 341.1L1265.4 339.4L1266.8 337.4L1268.7 336.0L1268.2 333.6L1269.2 331.2L1268.7 328.7L1272.9 329.5L1275.1 329.0L1277.2 328.2L1279.5 327.9L1281.5 326.8L1283.8 326.4L1286.3 326.4L1288.6 325.7L1290.2 323.8L1291.4 321.6L1294.3 321.8L1297.1 322.2L1299.9 322.9L1301.9 325.1L1303.5 327.6L1303.3 325.4L1303.7 323.1L1303.5 320.9L1303.7 318.7L1303.5 316.4L1304.4 314.2L1303.9 312.0L1304.2 309.7L1306.7 309.0L1309.2 308.3L1309.1 310.6L1308.7 312.9L1309.2 315.3L1308.7 317.6L1309.1 319.9L1309.1 322.2L1309.1 324.5L1309.2 326.8L1311.3 329.9L1311.4 327.6L1312.5 325.5L1312.9 323.2L1313.3 321.0L1314.7 319.0L1314.8 316.7L1315.7 314.6L1316.5 312.5L1317.0 310.2L1318.8 307.6L1320.5 304.9L1322.8 304.1L1325.1 303.6L1327.4 303.0L1329.7 302.4L1329.7 299.9L1329.0 297.6L1330.9 296.2L1333.1 295.6L1334.9 294.2L1337.0 293.2L1339.2 292.6L1341.1 291.4L1343.5 290.8L1345.8 290.2L1348.2 289.6L1350.0 287.5L1351.7 285.4L1352.9 282.9L1354.6 280.7L1355.5 283.7L1356.7 286.5L1359.6 287.1L1362.4 287.8L1365.2 288.4L1365.4 290.8L1365.9 293.1L1366.1 295.5L1366.5 297.8L1366.3 300.2L1366.9 302.6L1367.4 304.9L1369.9 306.1L1372.4 307.0L1375.2 307.4L1377.7 307.8L1380.1 308.8L1382.5 309.9L1385.1 310.2L1386.6 312.5L1388.7 314.3L1390.7 315.6L1392.2 317.4L1394.4 316.4L1396.7 316.1L1398.9 315.2L1401.2 314.7L1403.6 314.3L1405.2 312.2L1407.5 310.8L1409.3 308.8L1411.1 310.2L1413.0 311.4L1415.4 311.8L1417.1 313.4L1419.2 314.3L1421.2 315.5L1423.4 316.1L1425.1 317.8L1427.1 318.9L1429.5 319.3L1431.2 321.0L1433.4 321.6L1435.7 321.4L1437.9 321.5L1440.2 321.9L1442.5 321.6L1444.8 321.2L1447.3 321.0L1449.7 321.4L1452.2 321.5L1454.7 321.6L1457.1 322.8L1459.6 324.0L1461.8 325.7L1463.8 327.2L1465.4 329.1L1467.5 330.6L1469.9 331.6L1471.7 333.4L1473.9 334.6L1476.0 336.0L1474.7 338.0L1472.8 339.5L1471.0 341.1L1468.2 340.1L1465.3 339.4L1461.8 339.4L1461.3 342.1L1461.3 344.9L1460.4 347.5L1457.9 347.8L1455.6 348.8L1453.3 349.9L1451.1 351.2L1449.8 353.5L1447.6 354.9L1444.8 355.3L1442.0 355.7L1439.1 355.4L1438.1 357.8L1437.7 360.4L1437.2 362.8L1436.2 365.1L1435.6 367.8L1434.4 370.3L1433.4 372.9L1431.5 374.2L1429.9 375.8L1428.4 377.5L1427.9 375.2L1427.6 372.8L1428.1 370.3L1427.5 368.0L1427.2 365.6L1428.3 363.5L1429.1 361.2L1430.0 359.0L1431.3 357.1L1433.0 355.5L1434.1 353.4L1431.8 354.2L1429.6 355.3L1427.1 355.1L1424.9 356.3L1422.5 356.3L1420.1 356.3L1417.8 356.8L1414.9 357.2L1412.1 356.5L1409.3 356.8L1408.4 359.0L1406.5 360.5L1405.6 362.7L1404.5 364.7L1403.1 366.6L1401.6 368.4L1400.7 370.5L1403.9 371.5L1406.8 372.9L1406.9 375.6L1406.3 378.2L1406.3 380.9L1405.7 383.5L1404.6 385.5L1403.1 387.4L1401.8 389.3L1400.3 391.0L1398.6 392.7L1396.2 393.6L1393.6 394.2L1392.0 396.5L1390.1 398.4L1389.7 400.7L1390.1 403.1L1389.8 405.4L1389.4 408.5L1385.8 409.7L1385.8 407.1L1385.8 404.5L1383.7 400.9L1381.2 400.7L1378.7 399.9L1378.9 402.0L1376.3 402.0L1373.8 401.8L1375.9 405.4L1380.2 405.6L1379.1 407.9L1377.3 409.7L1378.5 412.6L1379.2 415.7L1379.4 417.6L1378.7 420.1L1377.0 422.1L1376.0 424.5L1374.2 426.0L1372.3 427.5L1370.0 428.9L1367.4 429.7L1365.2 430.6L1363.1 431.5L1361.7 430.7L1358.8 430.7L1356.7 433.8L1357.7 436.0L1359.8 437.5L1360.8 439.7L1360.7 442.7L1361.3 445.6L1357.9 447.3L1355.0 449.7L1355.3 447.0L1351.8 444.5L1349.3 442.7L1348.3 444.9L1347.1 447.0L1348.0 449.2L1348.9 451.3L1350.8 453.9L1353.2 456.0L1354.3 460.0L1353.2 460.2L1349.6 458.2L1348.2 455.7L1347.1 453.1L1345.8 450.6L1346.1 447.4L1346.1 444.1L1346.0 441.1L1344.9 438.2L1342.7 438.8L1340.4 439.0L1340.0 434.8L1337.3 431.5L1336.6 429.2L1333.3 430.3L1329.5 431.5L1326.9 433.9L1324.7 435.9L1323.1 438.2L1320.1 439.7L1320.2 443.4L1319.5 447.3L1317.7 448.8L1316.2 450.6L1314.5 448.4L1313.6 446.0L1312.4 443.7L1311.4 441.5L1310.6 439.3L1309.9 436.5L1309.6 433.8L1309.3 430.7L1306.3 431.8L1304.2 429.3L1302.0 426.9L1300.6 424.7L1297.8 425.3L1295.0 425.0L1292.4 425.1L1290.0 424.8L1287.6 424.1L1286.3 422.0L1283.9 421.8L1281.5 422.2L1279.7 420.5L1278.3 418.5L1275.1 417.3L1274.4 418.5L1276.5 422.2L1278.3 425.3L1279.5 426.1L1282.9 426.7L1284.0 424.8L1285.7 423.3L1286.4 426.1L1289.0 427.3L1291.1 429.2L1289.4 431.3L1288.3 433.8L1286.0 435.4L1284.3 437.5L1282.1 438.2L1280.0 439.3L1277.7 440.9L1275.1 442.1L1272.7 443.1L1270.1 443.7L1267.7 443.8L1266.8 439.7L1265.3 436.8L1264.1 433.8L1262.8 431.9L1261.6 430.0L1259.9 427.4L1258.7 424.5L1257.4 422.6L1256.2 420.6L1255.8 418.1L1254.9 415.2L1255.9 412.3L1257.3 408.9L1257.6 406.1L1255.2 405.7L1251.6 406.8L1249.5 406.3L1246.0 405.7L1243.5 402.7L1243.4 399.9L1243.4 398.6L1240.3 398.4L1238.4 399.4L1239.4 401.4L1240.0 403.6L1238.2 406.3L1236.4 403.9L1234.6 400.9L1234.6 398.6L1233.6 396.5L1231.5 394.5L1228.9 393.3L1227.2 391.5L1225.5 389.9L1223.7 389.7L1224.0 392.3L1226.1 395.2L1228.9 397.5L1232.5 399.6L1229.6 402.0L1228.5 403.6L1228.5 399.9L1226.1 398.7L1224.0 397.1L1221.1 394.2L1218.7 391.5L1216.1 393.1L1212.6 393.3L1210.5 394.2L1210.7 396.4L1207.3 398.4L1206.2 401.2L1205.5 403.2L1203.4 405.9L1199.8 406.1ZM1197.7 374.8L1197.7 371.7L1197.4 370.5L1194.7 369.6L1195.7 367.6L1194.1 368.1L1192.0 370.1L1192.7 372.9L1191.6 375.7L1194.1 376.2ZM1392.1 410.1L1394.3 408.0L1399.3 407.3L1400.7 405.4L1404.3 403.0L1405.0 399.0L1407.1 397.3L1407.8 400.9L1406.4 404.5L1406.1 408.0L1404.7 408.9L1402.9 409.4L1400.5 410.1L1398.6 411.3L1397.9 409.6L1395.1 410.1ZM1405.0 396.2L1406.7 397.1L1409.7 396.2L1412.8 393.7L1411.4 392.3L1407.6 389.5L1407.1 393.3ZM1390.5 411.8L1392.2 410.8L1393.5 412.3L1392.5 415.2L1391.1 415.3ZM1394.3 412.3L1397.5 410.6L1396.8 412.0L1395.1 412.6ZM1407.8 388.3L1410.0 387.2L1409.3 382.0L1411.4 382.0L1409.0 369.8L1408.1 375.3L1407.6 383.0ZM1376.7 428.4L1378.0 425.0L1379.3 425.3L1377.7 430.0ZM1360.4 434.2L1363.1 432.9L1363.8 433.8L1361.7 435.7ZM1319.5 450.6L1320.1 448.0L1322.4 451.3L1321.2 453.5ZM1376.6 439.0L1377.5 435.3L1379.7 435.3L1379.4 438.2L1382.3 444.1L1378.0 441.9ZM1379.4 452.0L1381.6 449.6L1384.4 448.2L1385.8 451.3L1384.4 453.7L1381.6 451.3ZM1379.4 447.7L1382.3 445.6L1384.4 446.3L1383.0 448.0L1380.9 448.9ZM1341.5 454.0L1344.7 454.6L1348.9 459.2L1353.9 463.4L1356.7 466.3L1356.4 470.3L1354.6 470.4L1351.0 467.7L1348.9 463.4L1346.1 459.9ZM1355.6 471.7L1359.6 470.8L1363.8 471.1L1366.4 472.0L1368.8 473.1L1368.8 474.4L1363.8 473.7L1357.4 472.5ZM1369.5 473.7L1375.2 473.8L1380.9 473.7L1383.7 473.7L1383.0 475.3L1375.2 474.8L1370.9 474.5ZM1381.6 476.7L1386.5 474.0L1385.8 474.8L1382.3 476.7ZM1361.0 459.9L1362.4 464.1L1363.8 466.3L1368.8 467.4L1371.6 466.3L1370.9 463.4L1373.8 460.6L1373.5 455.9L1375.2 454.5L1372.3 452.0L1370.2 454.5L1366.7 457.7L1363.8 459.4ZM1375.9 469.8L1377.3 465.6L1378.7 468.4L1380.9 468.8L1378.7 463.4L1383.7 459.9L1377.3 460.6L1375.2 463.4ZM1387.2 462.7L1388.7 459.9L1388.0 458.7L1387.7 461.3ZM1392.2 463.7L1396.5 463.4L1401.5 464.1L1406.4 465.7L1412.1 468.0L1413.5 469.8L1416.1 470.5L1414.9 472.7L1419.2 476.7L1414.9 476.3L1410.7 473.0L1408.5 475.3L1405.0 473.7L1402.2 473.8L1401.9 469.8L1395.8 467.7L1393.6 466.0ZM1417.1 469.8L1419.9 469.8L1422.0 468.0L1422.5 469.1L1419.9 471.0L1417.1 470.5ZM1451.9 514.3L1454.7 517.7L1459.7 519.7L1458.2 522.6L1456.8 525.0L1454.7 526.9L1454.1 523.1L1453.0 522.6L1454.0 518.6ZM1451.4 525.0L1453.7 526.9L1451.9 530.7L1449.0 532.7L1446.2 537.0L1442.6 535.7L1445.5 531.7L1449.7 527.5ZM1222.5 275.2L1226.1 282.1L1229.6 287.8L1231.0 282.1L1228.2 276.6L1231.8 273.1L1236.0 266.2L1230.3 263.0L1224.7 265.4L1221.8 269.3ZM1280.8 317.4L1284.3 318.3L1287.8 317.9L1285.7 309.7L1285.7 304.9L1288.6 299.7L1292.8 294.2L1297.1 291.4L1303.5 286.5L1301.3 284.6L1294.2 285.9L1288.6 290.2L1284.3 295.9L1282.2 303.4L1282.2 309.7L1280.0 314.3ZM1274.4 262.1L1280.0 263.8L1282.9 258.7L1277.2 255.2ZM1341.1 271.6L1348.2 278.7L1355.3 275.2L1353.9 259.6L1343.9 255.2ZM1399.3 302.4L1407.8 305.9L1419.2 298.1L1412.1 291.4L1402.2 291.4ZM1460.4 316.6L1465.3 316.6L1464.6 313.9L1460.4 313.9ZM1252.1 409.4L1254.5 408.9L1255.2 407.8L1253.1 408.4ZM1239.6 408.4L1243.5 408.7L1243.1 408.4L1240.3 407.8ZM1223.8 403.6L1228.4 403.0L1227.5 405.9ZM1218.1 401.8L1220.1 401.6L1220.0 397.9L1217.8 398.3ZM950.6 645.3L993.2 632.6L1035.8 619.1L1064.2 616.6L1099.7 616.6L1109.6 595.3L1113.9 588.0L1125.3 578.1L1121.0 588.0L1118.2 603.2L1135.2 645.3L1163.6 632.6L1192.0 611.9L1206.2 608.3L1234.6 607.4L1255.9 605.7L1270.1 595.3L1291.4 591.6L1305.6 597.2L1319.8 593.4L1348.2 588.0L1376.6 589.8L1405.0 589.8L1419.2 595.3L1433.4 603.2L1447.6 611.9L1461.8 645.3L1461.8 716.8L950.6 716.8ZM1285.7 261.3L1292.8 262.1L1297.1 257.0L1290.0 253.3ZM1233.9 267.8L1238.9 270.1L1244.5 263.8L1237.4 259.6Z" fill="#e8e8e8"/>
<path d="M1245.7 396.2L1247.4 397.7L1250.9 397.7L1257.3 396.7L1261.6 398.1L1265.1 397.1L1265.4 395.0L1260.2 391.3L1259.5 389.7L1262.3 386.2L1258.0 387.2L1255.9 389.3L1253.8 391.3L1252.3 389.3L1249.5 387.2L1248.1 389.9L1246.8 393.3ZM1272.9 390.3L1276.5 387.2L1281.5 386.6L1281.5 390.3L1279.0 391.5L1281.2 395.2L1281.5 399.9L1282.6 404.5L1278.6 405.9L1275.8 403.6L1276.5 399.4L1274.1 396.2L1272.9 393.3ZM1289.3 387.2L1293.5 389.3L1291.4 392.7L1289.3 391.3ZM1353.9 376.4L1356.7 374.1L1361.7 366.8L1361.0 366.1L1356.0 372.9L1353.6 375.7ZM1075.6 386.8L1081.2 383.2L1085.8 386.6L1083.4 387.4L1078.4 387.0ZM1081.5 396.2L1083.4 395.6L1084.4 389.3L1085.8 388.5L1082.0 388.7L1081.2 391.3ZM1085.9 388.5L1090.2 388.5L1092.6 390.7L1090.2 393.7L1089.0 393.9L1087.6 391.7L1086.2 389.5ZM1087.8 396.7L1091.2 395.6L1094.2 394.4L1092.9 395.6L1089.8 397.1ZM1092.9 393.7L1098.0 393.3L1097.6 391.9L1094.0 392.5Z" fill="#ffffff"/>
<path d="M1104.0 444.8L1103.2 449.2L1106.8 452.8L1110.3 453.5L1109.9 459.2L1106.8 460.6L1107.5 468.0M1121.0 449.9L1121.0 454.9L1117.5 456.3L1113.9 460.6L1111.1 459.2L1107.5 463.4L1106.8 467.7L1102.5 472.7L1103.2 476.3L1107.5 477.7L1112.5 476.0L1113.9 479.2L1119.6 482.1L1121.0 485.8L1123.8 491.0L1127.4 494.0L1128.8 499.5L1124.5 506.7L1130.2 512.9M1092.2 466.8L1095.4 466.3L1099.7 463.4L1102.5 464.8L1106.8 467.7M1094.0 459.9L1096.9 461.3L1099.7 462.0M1107.5 477.7L1108.2 483.5L1106.8 487.2L1108.9 494.0L1108.9 501.8L1106.8 511.7L1105.4 524.1L1104.0 535.7L1102.5 544.2L1108.2 548.7M1108.9 494.0L1117.5 494.0L1123.8 491.0M1117.5 494.0L1123.8 501.8L1128.8 499.5M1125.3 453.5L1125.3 459.2L1122.4 459.9M1129.5 453.7L1129.5 458.9L1132.4 458.4M1203.4 408.7L1204.1 414.0L1199.1 418.1L1193.8 421.4L1193.8 425.3L1189.2 427.7L1187.7 431.0L1182.1 431.5M1218.3 405.7L1217.6 412.3L1219.7 417.3L1220.4 425.3L1223.2 427.7M1189.2 427.7L1197.7 425.6L1199.1 438.2L1189.2 441.2L1182.5 444.3M1199.4 425.3L1207.6 431.5L1211.9 433.8L1223.2 427.7L1227.5 428.4L1240.3 433.8L1241.7 433.0L1241.7 430.0M1241.7 414.3L1241.7 430.0L1258.7 430.0M1227.5 428.4L1228.2 433.0L1225.4 441.9L1228.2 447.7L1237.4 446.3L1239.6 449.9L1240.3 444.8L1237.4 440.5L1240.3 433.8M1239.6 449.9L1244.5 454.9L1250.2 456.7L1254.5 455.6L1256.6 454.9L1255.2 450.6L1254.5 447.0L1258.0 441.5L1260.9 436.0M1240.3 444.8L1244.5 447.7L1248.8 448.0L1253.1 447.7L1254.5 447.0M1211.9 433.8L1207.6 440.5L1211.2 445.6L1226.1 443.4M1189.9 444.1L1194.8 447.7L1199.1 447.0L1201.9 446.3L1206.2 446.3L1211.2 445.6M1194.1 455.6L1194.8 447.7M1202.2 454.9L1201.9 446.3M1207.6 453.5L1206.2 446.3M1210.0 453.0L1211.2 445.6M1218.3 455.6L1220.4 452.0L1223.2 449.9L1226.8 444.1M1220.1 458.9L1222.5 458.9L1228.9 459.2L1231.8 457.0L1238.9 455.5L1244.5 454.9M1250.2 456.7L1248.1 463.4L1248.1 468.4L1249.5 473.4L1246.7 477.7L1241.7 478.4L1237.4 477.7L1228.9 472.7L1223.5 470.5M1237.4 480.6L1237.4 488.0L1241.7 487.7L1248.8 485.0L1253.1 482.1L1255.9 478.4M1223.0 486.5L1234.6 488.0L1234.6 494.0L1234.6 498.2L1234.6 504.3L1229.6 504.3M1234.6 498.2L1241.7 499.5L1247.4 494.8L1250.9 494.5L1251.6 501.5M1253.1 486.5L1251.6 492.5L1250.9 494.5M1248.1 463.4L1254.5 463.4L1262.3 468.4M1254.5 455.6L1264.4 456.3L1264.4 464.4M1264.4 456.3L1268.7 455.0L1274.4 450.6L1267.3 445.6M1193.7 396.2L1196.3 396.4L1197.0 397.7L1196.3 401.8L1195.7 405.0M1216.1 388.5L1221.1 387.2L1225.7 387.2L1229.6 387.2L1232.5 388.7L1236.0 388.3L1238.2 391.3L1238.2 396.2L1235.3 396.2L1233.6 396.5M1225.8 382.4L1228.9 383.0L1232.9 380.9L1238.2 382.0L1238.2 384.1L1243.8 383.7L1246.2 389.3L1238.2 391.3M1226.9 373.9L1227.5 377.5L1232.9 380.9M1238.2 382.0L1240.3 378.7L1239.6 375.3L1239.6 370.1L1236.0 365.6L1243.8 366.3L1246.0 365.1M1236.7 361.7L1245.2 361.7L1246.0 356.3M1239.6 376.2L1251.6 375.3L1255.9 377.5L1263.0 379.8L1260.2 385.8M1238.9 397.7L1243.8 396.5L1246.0 396.5M1223.2 357.7L1224.0 350.5L1226.8 339.4L1230.3 326.8L1235.3 324.9L1240.3 336.7M1236.0 324.9L1239.6 328.7L1240.3 336.7M1246.0 353.4L1248.8 349.0L1248.8 330.6L1247.4 322.0L1250.2 321.6M1257.6 406.1L1265.8 405.4L1269.4 404.8L1269.4 400.9L1265.1 397.1M1265.1 397.1L1272.2 397.7L1276.5 399.4M1260.2 391.3L1263.0 393.3L1272.2 396.5L1274.4 396.2M1269.4 404.8L1271.5 408.9L1274.1 414.8L1275.1 417.3M1255.9 418.1L1258.7 417.3L1261.6 413.2L1265.8 415.7L1272.2 418.6L1274.4 418.5M1257.3 412.3L1261.3 411.8L1264.4 409.7L1265.8 405.4M1267.3 437.5L1272.9 437.5L1280.0 434.5L1285.0 429.2L1285.7 423.3M1282.7 404.8L1287.1 403.6L1292.8 406.3L1292.8 414.8L1295.7 418.1L1293.5 425.0M1292.8 417.6L1300.6 418.1L1304.9 414.8L1307.0 410.6L1307.7 406.3L1312.0 405.4M1292.8 406.3L1299.9 404.5L1307.0 405.7L1312.0 405.4M1276.5 387.2L1278.6 378.2L1284.3 378.0L1292.8 377.5L1292.8 370.5L1304.2 367.3L1310.6 371.0L1314.8 370.5L1319.8 377.5L1329.7 382.0M1281.5 396.2L1285.7 390.3L1289.3 389.3L1292.8 392.3L1299.9 395.2L1304.2 397.1L1307.0 395.6L1311.3 393.7L1319.8 394.6L1320.5 390.3L1324.1 386.2L1327.6 386.2L1329.7 382.0M1282.7 404.8L1285.0 397.7L1289.3 395.2L1292.8 398.1L1299.9 404.5M1302.8 403.6L1307.0 400.9L1312.0 399.9L1310.6 405.4M1329.7 382.0L1334.0 378.7L1345.4 375.7L1351.0 376.4L1359.6 380.9L1368.8 379.3L1372.3 379.8L1376.6 374.1L1383.7 372.9L1387.2 380.2L1391.5 383.5L1397.9 383.5L1395.1 390.3L1392.2 394.6L1390.1 395.2L1383.0 399.9M1329.7 382.0L1335.4 389.3L1343.2 394.6L1355.3 397.1L1364.5 393.3L1368.8 389.7L1373.8 386.8L1376.2 385.2L1372.3 379.8M1312.0 405.4L1318.4 408.0L1317.7 413.2L1321.2 417.0L1331.2 420.7L1336.8 420.9L1343.9 420.2L1346.1 424.5L1349.6 430.0L1356.7 428.7L1359.6 430.7M1302.8 427.3L1307.0 426.1L1306.3 421.4L1311.3 416.5L1312.0 412.3L1315.5 408.9M1320.1 419.4L1331.2 423.0L1332.6 422.5L1332.6 430.0M1336.8 420.9L1341.8 421.4L1340.4 426.9L1337.3 431.5M1346.1 424.5L1349.6 432.2L1346.1 437.5L1346.1 444.1M1349.6 430.0L1355.3 435.3L1358.8 440.5L1356.7 445.6M1349.6 432.2L1353.9 436.8L1356.0 441.2L1351.8 444.5M1348.6 452.8L1351.0 453.5M1385.4 403.9L1388.7 403.0M1039.9 413.2L1043.2 413.2L1048.6 415.2L1052.6 414.3L1055.0 414.3L1057.8 417.6L1059.9 418.9L1062.1 417.6L1063.5 419.7L1065.6 422.8L1068.0 423.7M1075.6 441.2L1077.0 436.3L1079.5 436.3L1079.5 439.1M1079.3 441.3L1082.0 439.3L1085.5 440.7L1088.1 440.5M1084.5 446.1L1087.3 446.3M1088.3 449.9L1088.5 448.3M1406.3 465.7L1406.4 475.0M1368.8 455.5L1370.2 456.0L1373.0 456.0" fill="none" stroke="#bdbdbd" stroke-width="0.6"/>
<path d="M1214.7 375.7L1215.0 378.0L1215.3 380.9L1217.8 382.0L1217.0 384.9L1221.1 385.2L1224.7 385.2L1225.8 382.4L1224.0 379.1L1227.5 377.5L1226.9 373.9L1226.4 370.8L1222.5 370.1L1221.5 370.5L1219.7 368.6L1218.4 368.1L1218.3 371.0L1216.1 371.7L1216.4 374.1Z" fill="#e6e6e6" stroke="#555" stroke-width="1"/>
<path d="M1006.0 322.5L1002.4 320.4L999.3 319.4L996.0 319.6L993.1 318.7L990.4 317.4L988.2 316.9L985.9 316.5L984.0 315.2L981.6 316.9L979.0 318.3L975.5 320.8L974.4 322.8L973.3 324.9L970.5 327.6L972.3 329.1L974.0 330.6L972.6 333.9L970.3 335.9L967.6 337.4L970.1 339.3L972.6 341.1L975.1 340.5L977.6 341.1L977.9 343.4L974.7 345.9L971.9 347.5L970.5 350.5L971.9 353.4L975.5 355.1L976.2 358.5L979.0 358.3L981.8 358.7L983.3 361.4L981.1 364.3L979.2 365.7L976.9 366.1L973.3 368.3L976.2 367.6L979.7 366.1L982.1 364.1L984.7 362.2L985.7 360.0L987.5 358.5L988.4 355.7L990.4 353.4L993.2 351.4L996.0 353.4L998.9 352.6L1001.7 354.9L1006.0 355.1L1008.1 356.0L1011.0 358.7L1013.1 360.9L1015.2 364.3L1017.2 366.0L1018.8 368.1L1021.6 367.3L1021.6 365.6L1019.0 363.8L1017.9 361.8L1017.3 359.6L1015.6 357.8L1013.8 356.3L1011.0 357.4L1008.8 354.6L1006.0 354.0ZM1031.5 382.0L1071.0 382.0L1071.0 381.1L1072.0 382.6L1077.0 383.7L1079.1 384.1L1086.2 387.2L1089.0 389.7L1089.0 395.2L1088.3 396.2L1094.0 394.6L1094.0 393.3L1097.6 391.9L1099.7 390.3L1104.7 390.3L1106.1 388.7L1106.8 385.8L1108.2 385.4L1109.6 385.6L1109.9 388.9L1111.1 390.7L1112.5 389.7L1114.6 389.5L1112.5 391.9L1113.0 393.3L1115.3 391.3L1119.6 389.7L1121.0 388.3L1118.9 386.2L1115.3 387.7L1114.2 384.9L1113.2 383.7L1114.9 382.8L1114.6 381.7L1111.8 381.5L1107.5 383.2L1105.4 386.2L1107.5 384.1L1111.1 381.3L1113.9 379.3L1121.0 379.3L1125.3 376.4L1127.1 374.6L1126.7 371.5L1123.1 369.3L1120.3 366.1L1118.4 362.5L1117.3 360.3L1116.0 358.2L1115.6 356.0L1114.6 354.0L1113.2 357.1L1110.3 359.6L1107.5 357.7L1107.8 355.0L1106.8 352.6L1104.5 350.7L1102.5 348.4L1099.3 348.6L1096.2 347.5L1098.0 350.3L1095.4 352.6L1095.0 355.2L1095.5 357.8L1096.2 360.4L1097.3 362.9L1097.1 365.6L1095.6 367.4L1094.0 369.3L1094.7 376.4L1091.9 376.9L1089.0 373.4L1085.5 367.3L1083.3 365.4L1080.5 364.3L1077.7 363.3L1074.8 362.5L1073.9 359.9L1072.3 357.7L1070.9 354.9L1072.0 352.0L1071.6 348.5L1074.8 347.5L1077.7 344.3L1079.9 342.8L1082.0 341.1L1082.9 338.9L1081.3 335.9L1084.1 334.2L1086.9 332.4L1089.8 330.6L1090.0 328.0L1089.3 325.4L1089.0 322.9L1085.5 321.6L1084.7 323.9L1083.8 326.0L1081.2 326.8L1078.4 324.9L1075.2 323.5L1075.6 320.0L1075.1 317.3L1073.0 315.4L1072.0 313.0L1070.6 314.3L1070.1 317.0L1070.0 319.6L1071.5 322.3L1069.9 324.9L1068.1 326.5L1067.0 328.7L1064.4 330.3L1061.4 329.5L1059.2 328.6L1057.8 326.6L1055.7 325.7L1052.1 328.0L1049.8 329.1L1047.2 329.5L1042.9 328.7L1040.7 326.4L1038.6 324.1L1036.2 323.4L1034.4 321.6L1031.7 322.8L1028.7 322.9L1025.6 322.8L1024.4 320.0L1021.6 320.8L1019.2 321.3L1017.3 322.9L1015.3 324.1L1013.1 325.3L1010.7 324.5L1008.8 322.9L1006.0 322.5L1006.0 354.0L1008.8 354.6L1011.0 357.4L1013.8 356.3L1015.9 357.5L1017.3 359.6L1018.8 361.4L1019.0 363.8L1021.6 365.6L1021.6 367.3L1022.3 370.5L1024.4 374.1L1025.2 377.5L1028.7 379.8L1030.8 381.5ZM1118.4 333.9L1120.1 337.9L1116.0 339.4L1115.5 341.7L1114.5 343.8L1113.4 345.9L1113.9 348.4L1111.8 349.6L1108.0 350.2L1106.8 346.5L1104.8 345.0L1102.4 344.1L1101.1 341.8L1098.6 341.9L1096.2 341.1L1097.9 338.3L1101.1 337.7L1098.6 333.8L1102.5 331.4L1101.3 328.9L1098.8 327.4L1097.6 324.9L1094.9 323.1L1092.6 320.8L1090.6 319.7L1088.3 319.3L1085.0 321.2L1084.1 317.4L1082.4 315.8L1081.0 313.9L1078.4 312.9L1079.1 309.7L1082.0 308.7L1083.9 306.4L1085.5 303.9L1087.8 305.1L1090.2 304.3L1092.6 304.4L1095.6 305.8L1096.9 308.8L1098.7 310.1L1100.2 311.9L1102.9 312.0L1104.0 314.3L1106.4 315.0L1108.0 316.9L1109.6 318.7L1109.7 321.6L1111.7 324.0L1111.8 326.8L1113.8 328.1L1116.4 328.7L1116.7 331.7ZM1062.1 322.9L1060.7 325.2L1058.5 326.8L1055.7 326.7L1052.9 325.8L1050.0 326.4L1046.8 327.1L1044.3 324.9L1041.3 323.5L1039.3 320.8L1038.1 318.8L1037.9 316.6L1037.9 314.3L1040.1 313.4L1041.1 311.2L1042.9 309.7L1045.1 308.6L1047.2 307.4L1049.3 305.3L1052.1 306.4L1055.7 306.4L1057.1 309.7L1058.3 312.2L1060.4 314.0L1061.4 316.6L1062.2 319.6ZM1040.3 314.3L1038.1 314.9L1035.8 315.2L1033.7 313.6L1030.2 315.0L1028.7 312.1L1029.6 309.4L1027.4 306.6L1030.0 304.1L1029.4 301.3L1032.1 301.1L1034.4 299.7L1037.6 299.3L1040.1 301.3L1041.1 304.3L1042.2 307.4L1040.8 309.5L1040.7 311.9ZM1118.2 242.4L1116.2 241.2L1113.7 240.8L1112.1 239.1L1110.8 236.9L1108.1 236.8L1106.8 234.7L1104.4 234.3L1102.1 237.3L1099.7 234.4L1097.3 235.4L1095.0 235.9L1092.6 234.7L1091.1 236.5L1089.2 237.9L1087.9 240.0L1086.8 242.1L1084.3 243.1L1084.1 246.1L1081.2 246.7L1080.4 249.2L1078.4 250.5L1076.6 252.4L1078.1 255.4L1076.5 257.4L1075.6 259.6L1077.2 261.3L1076.9 263.9L1079.1 265.3L1079.8 267.4L1080.9 269.3L1081.2 271.6L1081.5 273.9L1081.9 276.2L1084.5 277.6L1084.8 279.9L1085.5 282.1L1088.8 282.5L1088.9 285.4L1091.1 286.7L1091.2 289.6L1093.1 287.8L1095.4 286.5L1096.2 283.8L1096.3 281.2L1094.7 278.7L1094.4 274.5L1096.7 273.0L1100.4 273.1L1102.5 271.6L1102.3 268.8L1104.4 267.3L1103.2 263.9L1106.6 263.2L1109.2 262.0L1109.6 259.6L1108.5 256.3L1111.5 255.2L1112.1 252.8L1111.8 250.0L1115.7 249.2L1114.5 246.0L1118.1 245.1ZM1092.6 299.7L1090.3 299.2L1087.9 300.1L1085.6 298.8L1083.3 300.2L1080.9 300.1L1078.6 300.7L1076.3 299.7L1076.9 297.1L1074.2 294.7L1075.6 291.9L1077.7 289.8L1079.8 287.8L1082.6 288.9L1085.5 287.7L1088.3 288.4L1090.5 290.4L1092.6 292.5L1093.2 294.9L1092.1 297.3ZM1084.1 278.7L1081.4 277.5L1078.3 277.7L1075.6 276.6L1074.7 274.6L1072.1 273.0L1072.5 270.6L1073.2 268.1L1073.4 265.7L1072.8 263.6L1069.3 262.3L1070.6 259.6L1072.5 258.1L1073.4 255.6L1075.6 254.4L1077.0 252.4L1078.2 254.9L1082.2 255.4L1082.1 258.8L1083.4 261.3L1083.7 263.8L1084.2 266.2L1086.2 268.7L1083.6 271.3L1084.1 273.7L1084.0 276.2ZM1069.2 313.0L1066.0 312.6L1062.8 313.0L1062.1 310.1L1060.9 307.4L1063.4 306.2L1064.7 303.6L1067.0 302.4L1070.6 304.9L1070.2 307.6L1069.2 310.2ZM1074.1 312.1L1070.6 309.7L1071.1 307.3L1071.2 304.8L1070.6 302.4L1073.8 301.7L1077.0 302.4L1077.6 305.3L1077.7 308.3L1076.3 310.6ZM1057.1 297.0L1054.8 298.2L1052.1 298.2L1049.7 299.3L1047.2 299.7L1045.0 298.4L1043.2 296.6L1040.4 296.2L1038.6 294.2L1038.8 291.4L1040.3 289.5L1042.9 288.4L1045.3 287.9L1047.2 285.7L1050.0 286.5L1052.9 287.0L1054.1 289.3L1055.7 291.4L1057.6 293.9ZM1067.0 297.0L1064.6 296.4L1062.3 295.5L1059.9 294.8L1061.1 292.7L1061.3 290.3L1062.8 288.4L1065.4 288.5L1067.8 289.6L1067.2 292.0L1067.4 294.6ZM1074.1 297.0L1069.2 295.9L1071.3 291.9L1074.1 293.7ZM1042.9 288.4L1040.7 289.6L1038.3 290.6L1035.8 291.4L1034.4 289.4L1032.2 288.4L1033.7 286.6L1035.5 285.3L1036.9 283.5L1038.6 282.1L1040.2 284.1L1041.1 286.6ZM1067.0 285.3L1064.8 283.8L1062.0 283.8L1059.5 283.3L1057.1 282.1L1057.8 279.5L1057.4 276.8L1057.5 274.1L1058.5 271.6L1060.6 273.3L1063.3 273.9L1065.6 275.2L1065.5 277.8L1066.5 280.2L1066.2 282.8ZM1091.9 344.3L1089.4 345.5L1086.9 346.5L1084.4 345.0L1082.7 342.7L1082.6 340.0L1084.1 337.7L1086.9 336.0L1088.6 338.1L1090.5 340.1L1091.0 342.3ZM1131.4 385.2L1130.2 386.8L1127.4 386.2L1126.0 384.9L1122.0 384.9L1123.1 382.0L1124.5 378.2L1127.2 376.2L1127.0 379.8L1129.5 380.9L1130.9 383.0ZM1031.1 383.5L1028.7 382.4L1023.7 378.2L1025.9 378.0L1030.1 380.9ZM1019.5 375.3L1018.0 371.7L1017.3 370.5L1018.8 370.5L1019.9 372.9ZM1115.3 387.4L1118.2 388.3L1117.9 387.2L1115.0 386.4ZM1115.0 381.5L1118.4 381.7L1117.5 380.7L1114.8 380.0ZM1031.5 382.0L1033.9 382.2L1036.2 381.7L1038.5 382.0L1040.8 381.9L1043.2 382.0L1045.5 381.7L1047.8 381.8L1050.1 382.0L1052.4 382.3L1054.8 381.7L1057.1 382.0L1059.4 382.2L1061.7 382.3L1064.0 381.7L1066.4 381.7L1068.7 382.3L1071.0 382.0L1071.0 381.1L1072.0 382.6L1074.4 383.5L1077.0 383.7L1079.1 384.1L1081.5 385.1L1084.0 385.9L1086.2 387.2L1089.0 389.7L1088.8 392.4L1089.0 395.2L1088.3 396.2L1091.2 395.3L1094.0 394.6L1094.0 393.3L1097.6 391.9L1099.7 390.3L1102.2 390.6L1104.7 390.3L1106.1 388.7L1106.8 385.8L1108.2 385.4L1109.6 385.6L1109.9 388.9L1111.1 390.7L1108.9 391.7L1106.1 393.7L1105.7 395.8L1106.8 396.5L1104.7 397.5L1101.1 398.8L1101.1 400.9L1099.0 402.7L1098.3 405.4L1099.0 408.0L1097.6 409.6L1095.4 411.0L1093.7 412.3L1091.2 414.3L1090.8 417.3L1091.9 420.1L1092.6 423.0L1091.9 425.0L1090.9 424.8L1090.0 423.0L1088.8 420.6L1088.6 418.1L1086.9 417.3L1084.1 416.7L1080.5 416.7L1079.4 418.5L1077.7 418.8L1075.6 418.0L1072.7 418.0L1071.3 418.6L1068.5 420.9L1068.0 423.7L1065.6 422.8L1063.5 419.7L1062.1 417.6L1059.9 418.9L1057.8 417.6L1055.0 414.3L1052.6 414.3L1048.6 415.2L1045.9 414.1L1043.2 413.2L1039.9 413.2L1037.9 410.6L1034.9 409.6L1033.1 406.3L1032.2 404.5L1030.4 400.9L1029.7 399.0L1029.8 396.2L1030.2 393.7L1030.1 391.3L1030.1 387.7L1029.4 385.5L1029.1 383.2L1031.5 383.7L1032.0 382.4ZM985.0 432.7L986.1 433.9L984.8 434.7L984.5 433.5ZM981.6 430.6L982.3 431.0L984.3 432.1L983.7 431.3ZM1110.8 435.3L1113.0 435.4L1112.9 436.0L1110.8 436.0ZM1198.1 379.5L1200.5 378.9L1204.1 378.2L1208.0 377.1L1208.6 373.9L1206.6 372.0L1205.9 370.1L1204.1 368.1L1203.4 365.8L1201.9 365.6L1203.6 361.7L1201.2 361.2L1201.8 358.7L1199.1 358.7L1198.2 361.7L1197.7 363.5L1198.4 366.8L1199.4 368.6L1201.7 368.6L1201.4 370.5L1202.1 372.2L1199.5 373.4L1200.5 375.3L1198.7 375.9L1201.5 376.6L1198.4 379.3ZM1198.4 369.8L1197.4 367.3L1195.7 367.6L1194.7 369.6L1197.0 370.5ZM1204.4 355.1L1204.8 352.6L1204.1 353.4ZM1203.6 393.5L1204.5 389.3L1203.1 386.2L1199.8 384.5L1199.5 382.8L1203.6 382.6L1204.4 380.4L1206.5 380.9L1208.5 377.8L1209.8 377.3L1212.2 379.8L1213.0 379.8L1215.3 380.9L1217.8 382.0L1217.0 384.9L1214.7 387.7L1216.1 388.7L1215.6 390.3L1216.1 391.9L1216.8 392.7L1214.7 394.0L1212.6 393.3L1210.5 394.2L1210.7 395.2L1208.3 395.2L1205.5 394.6ZM1218.4 394.4L1219.7 394.4L1219.5 397.3L1218.7 397.1ZM1367.4 494.0L1367.5 497.2L1368.1 500.3L1369.0 503.0L1369.5 505.9L1369.8 508.1L1369.7 510.3L1370.2 512.5L1369.5 513.9L1371.6 514.8L1373.8 515.1L1375.8 513.9L1378.0 513.0L1380.1 512.2L1382.3 511.7L1385.1 510.3L1389.4 509.5L1392.9 509.2L1396.5 511.4L1397.8 513.2L1399.0 515.1L1401.5 512.5L1401.9 516.2L1404.4 517.7L1405.7 520.4L1407.8 521.2L1410.0 521.9L1413.9 522.4L1416.4 520.1L1419.2 519.5L1419.7 516.9L1420.3 514.3L1421.3 512.0L1422.8 510.0L1423.3 507.1L1424.2 504.3L1424.0 501.4L1423.5 498.7L1422.1 496.5L1420.3 494.8L1418.5 492.5L1416.1 490.9L1414.2 488.7L1413.6 486.1L1412.8 483.5L1410.0 482.1L1409.5 479.6L1408.5 477.3L1407.3 480.6L1407.6 483.2L1407.1 485.8L1405.0 487.5L1401.5 485.0L1399.0 483.5L1400.5 479.5L1398.6 479.2L1395.1 478.4L1392.2 479.5L1390.9 481.4L1390.1 483.5L1387.7 482.4L1385.1 482.1L1383.0 485.8L1379.9 488.0L1378.0 490.2L1376.0 491.2L1373.8 491.6L1371.6 492.1L1368.8 493.7ZM1411.7 525.4L1416.8 525.7L1416.4 530.1L1414.5 530.9L1412.5 528.8ZM973.3 368.3L969.8 370.5L966.9 372.2L965.5 372.7L967.6 371.5L971.2 369.8ZM964.8 373.2L961.2 374.6L958.4 375.3L954.9 375.9L951.3 376.2L949.9 376.6L952.7 375.5L957.7 374.8L962.0 373.9ZM986.1 362.5L989.7 362.0L989.2 359.6L986.8 360.4ZM1016.6 367.6L1018.8 366.8L1015.9 362.2L1013.1 359.8L1013.8 362.5L1015.2 365.1ZM1019.5 368.6L1020.5 367.6L1018.0 364.3L1017.3 366.1Z" fill="#dcc3b6" stroke="#5c5c5c" stroke-width="0.85" stroke-linejoin="round"/>
<g transform="translate(511.2,0)"><path d="M607.0 242.4l-3.7 2.1M605.0 241.2l-2.6 2.0M602.5 240.8l-2.5 2.3M599.6 236.9l-0.5 1.7M593.2 234.3l-4.1 1.5M586.1 235.4l2.2 2.2M583.8 235.9l1.2 1.9M581.4 234.7l0.5 2.8M578.0 237.9l0.1 3.0M575.6 242.1l3.5 2.9M569.2 249.2l2.4 0.2M567.2 250.5l1.6 2.2M566.9 255.4l2.2 3.4M565.3 257.4l3.8 -1.9M564.4 259.6l1.9 1.9M566.0 261.3l3.8 0.3M565.7 263.9l1.3 -2.1M569.7 269.3l0.8 -1.6M570.0 271.6l2.0 -0.4M570.7 276.2l0.3 -3.7M573.3 277.6l1.3 -1.3M573.6 279.9l-0.2 -2.3M577.7 285.4l1.7 -1.3M579.9 286.7l2.4 -2.4M580.0 289.6l1.8 -1.1M581.9 287.8l1.3 -2.1M584.2 286.5l-1.2 -1.3M585.1 281.2l0.4 -2.6M583.5 278.7l2.2 -1.9M589.2 273.1l-3.5 -2.4M591.1 268.8l-3.4 -1.5M592.0 263.9l-0.7 -4.1M598.0 262.0l-1.4 0.7M597.3 256.3l-2.2 -0.5M600.6 250.0l-1.8 3.2M604.5 249.2l-1.9 2.5M607.2 333.9l-0.8 -2.0M608.9 337.9l-2.8 -0.4M604.8 339.4l-2.6 -0.4M603.3 343.8l-3.3 -2.6M595.6 346.5l-1.4 -0.7M587.4 341.9l1.0 -2.8M586.7 338.3l1.5 -0.8M581.4 320.8l2.7 3.2M577.1 319.3l2.2 3.4M571.2 315.8l2.7 2.0M569.8 313.9l3.1 3.2M570.8 308.7l1.3 3.0M572.7 306.4l0.2 1.7M576.6 305.1l1.1 2.7M579.0 304.3l0.3 3.0M585.7 308.8l2.1 1.1M589.0 311.9l2.4 3.5M592.8 314.3l-2.1 1.3M596.8 316.9l-2.2 3.2M600.5 324.0l-2.4 -0.0M600.6 326.8l-4.0 -0.4M581.4 299.7l-2.8 0.2M579.1 299.2l-2.7 -0.3M572.1 300.2l3.2 -3.1M567.4 300.7l-0.3 -4.1M565.1 299.7l3.2 -0.5M565.7 297.1l1.5 0.4M563.0 294.7l1.6 -0.1M566.5 289.8l1.6 0.0M580.9 297.3l-2.0 -0.5M572.9 278.7l-1.7 -3.2M570.2 277.5l-1.6 -1.9M561.3 270.6l4.2 -0.7M562.0 268.1l3.4 1.4M562.2 265.7l3.4 0.0M558.1 262.3l3.5 2.1M565.8 252.4l-1.3 3.7M570.9 258.8l-4.2 1.5M575.0 268.7l-2.1 -3.5M572.4 271.3l-2.8 0.0M549.5 325.2l-0.6 -1.6M544.5 326.7l-2.8 -2.6M541.7 325.8l-2.5 -1.8M526.7 316.6l2.7 -1.4M547.1 312.2l-4.4 -0.5M551.0 319.6l-2.9 -0.8M526.9 314.9l1.3 -2.7M516.2 306.6l2.7 0.6M526.4 299.3l-0.6 3.9M529.6 309.5l-3.8 -2.0M529.5 311.9l-0.7 -1.4M545.9 297.0l-3.5 0.3M536.0 299.7l1.0 -1.6M532.0 296.6l1.2 -2.8M531.7 288.4l3.3 0.7M544.5 291.4l-3.8 -0.8M572.9 337.7l3.3 1.5M577.4 338.1l-2.3 1.5M579.8 342.3l-3.6 0.0M604.4 356.0l-3.0 1.8M596.3 357.7l-3.8 -0.2M593.3 350.7l-1.0 1.5M591.3 348.4l-3.0 0.6M585.0 347.5l-1.2 1.8M561.1 357.7l1.9 -3.9M571.7 338.9l-2.5 3.1M570.1 335.9l-0.4 3.7M575.7 332.4l0.6 3.0M578.6 330.6l-3.6 1.5M550.2 329.5l2.1 2.0M548.0 328.6l2.5 2.3M510.4 320.8l2.7 2.6M504.1 324.1l2.6 -0.2M501.9 325.3l4.2 -0.0M504.7 357.5l3.7 0.6M558.0 313.0l0.4 -1.9M551.6 313.0l1.9 -2.8M550.9 310.1l2.6 1.0M555.8 302.4l-1.4 2.9M559.4 304.9l-2.3 0.6M559.0 307.6l-1.3 0.9M558.0 310.2l-1.4 -2.3M559.9 307.3l3.6 2.5M560.0 304.8l0.9 2.7M565.8 302.4l-2.7 3.4M551.1 295.5l2.1 -1.9M548.7 294.8l0.9 -2.9M549.9 292.7l3.5 -0.4M551.6 288.4l0.5 2.7M553.6 283.8l-3.9 -1.4M546.6 279.5l3.1 0.6M549.4 273.3l2.8 3.4M554.3 277.8l-1.1 2.0" stroke="#6a6a6a" stroke-width="0.8" fill="none"/></g>
<path d="M1075.6 386.8L1081.2 383.2L1085.8 386.6L1083.4 387.4L1078.4 387.0ZM1081.5 396.2L1083.4 395.6L1084.4 389.3L1085.8 388.5L1082.0 388.7L1081.2 391.3ZM1085.9 388.5L1090.2 388.5L1092.6 390.7L1090.2 393.7L1089.0 393.9L1087.6 391.7L1086.2 389.5ZM1087.8 396.7L1091.2 395.6L1094.2 394.4L1092.9 395.6L1089.8 397.1ZM1092.9 393.7L1098.0 393.3L1097.6 391.9L1094.0 392.5Z" fill="#ffffff" stroke="#777" stroke-width="0.6"/>
</g>
<rect x="520.5" y="590" width="175" height="14" fill="#ffffff" opacity="0.85"/>
<text x="523" y="602" font-size="10.95" fill="#555" font-weight="normal" text-anchor="start" >© 2026 Mapbox © OpenStreetMap</text>
<path d="M782 189 V179 a2 2 0 0 1 2 -2 H830 a2 2 0 0 1 2 2 V189 Z" fill="#666"/>
<line x1="786.8" y1="180.5" x2="827.3" y2="180.5" stroke="#fff" stroke-width="1" />
<line x1="786.8" y1="184.5" x2="827.3" y2="184.5" stroke="#fff" stroke-width="1" />
<rect x="0" y="644" width="1097" height="27" fill="#e4e4e4" />
<line x1="0" y1="644.5" x2="1097" y2="644.5" stroke="#c9c9c9" stroke-width="1" />
<rect x="989.5" y="645" width="104" height="26" fill="#f6f6f6" />
<text x="20.4" y="663.8" font-size="12.3" fill="#555" font-weight="normal" text-anchor="start" >Data Source</text>
<line x1="126.3" y1="645" x2="126.3" y2="671" stroke="#c9c9c9" stroke-width="1" />
<text x="132.7" y="663.8" font-size="12.3" fill="#555" font-weight="normal" text-anchor="start" >conversion per pro.cat</text>
<line x1="269.3" y1="645" x2="269.3" y2="671" stroke="#c9c9c9" stroke-width="1" />
<text x="275.3" y="663.8" font-size="12.3" fill="#555" font-weight="normal" text-anchor="start" >age.gro per clicks</text>
<line x1="383.3" y1="645" x2="383.3" y2="671" stroke="#c9c9c9" stroke-width="1" />
<text x="389.4" y="663.8" font-size="12.3" fill="#555" font-weight="normal" text-anchor="start" >clicks per country</text>
<line x1="498" y1="645" x2="498" y2="671" stroke="#c9c9c9" stroke-width="1" />
<text x="504.3" y="663.8" font-size="12.3" fill="#555" font-weight="normal" text-anchor="start" >con. per imp.</text>
<line x1="585.4" y1="645" x2="585.4" y2="671" stroke="#c9c9c9" stroke-width="1" />
<text x="591.2" y="663.8" font-size="12.3" fill="#555" font-weight="normal" text-anchor="start" >plat. per imp.</text>
<line x1="673.7" y1="645" x2="673.7" y2="671" stroke="#c9c9c9" stroke-width="1" />
<text x="678.6" y="663.8" font-size="12.3" fill="#555" font-weight="normal" text-anchor="start" >clicks per cat.</text>
<line x1="765.4" y1="645" x2="765.4" y2="671" stroke="#c9c9c9" stroke-width="1" />
<text x="789.5" y="663.8" font-size="12.3" fill="#555" font-weight="normal" text-anchor="start" >Dashboard 1</text>
<line x1="869.7" y1="645" x2="869.7" y2="671" stroke="#c9c9c9" stroke-width="1" />
<text x="875" y="663.8" font-size="12.3" fill="#555" font-weight="normal" text-anchor="start" >conv.value</text>
<line x1="943.6" y1="645" x2="943.6" y2="671" stroke="#c9c9c9" stroke-width="1" />
<text x="949" y="663.8" font-size="12.3" fill="#555" font-weight="normal" text-anchor="start" >clicks</text>
<line x1="989.2" y1="645" x2="989.2" y2="671" stroke="#c9c9c9" stroke-width="1" />
<text x="1013.4" y="662.7" font-size="11.9" fill="#333" font-weight="bold" text-anchor="start" >Dashboard 2</text>
<line x1="1093.5" y1="645" x2="1093.5" y2="671" stroke="#c9c9c9" stroke-width="1" />
<path d="M6 656 a4 1.5 0 0 1 8 0 v7 a4 1.5 0 0 1 -8 0 z M6 656 a4 1.5 0 0 0 8 0" fill="none" stroke="#666" stroke-width="1"/>
<path d="M773.5 653.5 h10 v10 h-10 z M778.5 653.5 v10 M773.5 658.5 h10" fill="none" stroke="#555" stroke-width="1"/>
<path d="M997.5 653.5 h10 v10 h-10 z M1002.5 653.5 v10 M997.5 658.5 h10" fill="none" stroke="#555" stroke-width="1"/>
<g opacity="0.13">
<g fill="none" stroke="#6a6a6a" stroke-width="6" stroke-linecap="round" stroke-linejoin="round"><circle cx="493.7" cy="623.5" r="10.5"/><path d="M504.2 600V623.5Q504.2 631.5 512 631.5H592"/><circle cx="524.5" cy="621.5" r="8.5"/><path d="M533 621.5V631.5M540 631.5Q545 631.5 545 614M545 624Q545 631.5 550 631.5Q555.5 631.5 555.5 614"/><circle cx="601" cy="623.5" r="10.5"/></g>
<g fill="#6a6a6a"><circle cx="544" cy="607.5" r="3.2"/><circle cx="555" cy="607.5" r="3.2"/></g>
<text x="548" y="652.2" font-size="22" font-weight="bold" fill="#6a6a6a" text-anchor="middle" letter-spacing="0.2">mostaql.com</text>
</g>
</svg></body></html>
